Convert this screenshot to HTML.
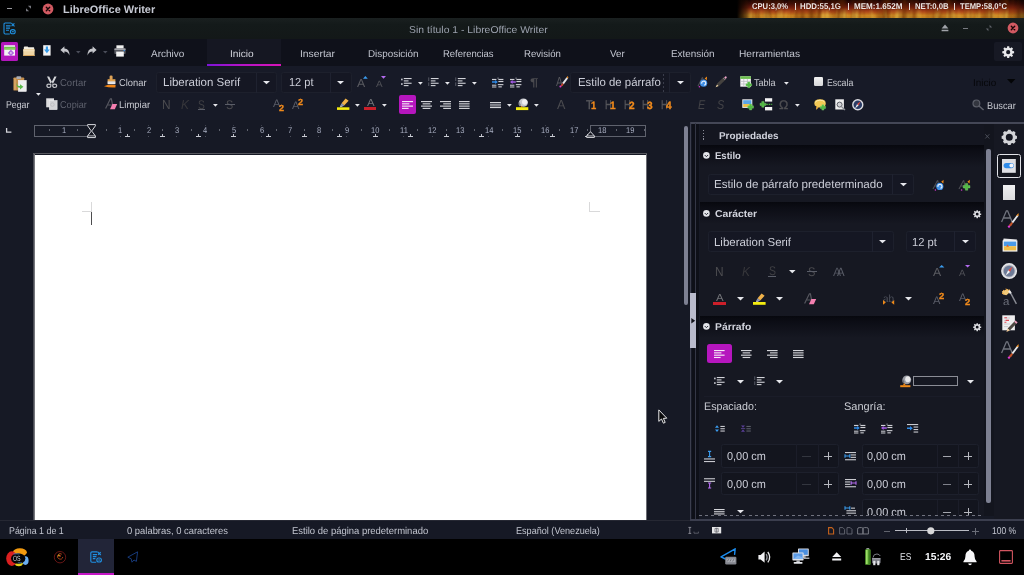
<!DOCTYPE html>
<html>
<head>
<meta charset="utf-8">
<title>Sin título 1 - LibreOffice Writer</title>
<style>
*{box-sizing:border-box;margin:0;padding:0}
html,body{width:1024px;height:575px;overflow:hidden;background:#161925}
body{font-family:"Liberation Sans",sans-serif;font-size:10px;color:#c5c8d2;position:relative}
.abs{position:absolute}
svg{display:block;overflow:visible}
.t{position:absolute;white-space:nowrap;text-rendering:geometricPrecision}
#topbar{left:0;top:0;width:1024px;height:18px;background:#000}
#titlebar{left:0;top:18px;width:1024px;height:21px;background:linear-gradient(#1a2020,#141a1a 30%,#131818)}
#tabrow{left:0;top:39px;width:1024px;height:27px;background:#0f111a}
#toolbar{left:0;top:66px;width:1024px;height:54px;background:#171a27}
#page{left:35px;top:155px;width:611px;height:365px;background:#fff}
#status{left:0;top:521px;width:1024px;height:18px;background:#161925}
#taskbar{left:0;top:539px;width:1024px;height:36px;background:#000}
.combo{position:absolute;background:#151723;border:1px solid #1d202c;border-radius:2.5px}
</style>
</head>
<body>
<!-- p_top -->
<div id="topbar" class="abs"></div>
<div class="abs" style="left:7px;top:8px;width:5px;height:1px;background:#9a9aa0;"></div>
<svg class="abs" style="left:25px;top:5px;" width="7" height="7" viewBox="0 0 7 7"><path d="M1 6.3 V3.2 L4.1 6.3Z M6 0.7 V3.8 L2.9 0.7Z" fill="#77787f"/></svg>
<svg class="abs" style="left:42px;top:3px;" width="12" height="12" viewBox="0 0 12 12"><circle cx="6" cy="6" r="5.4" fill="#d25a62"/><path d="M4.3 4.3 L7.7 7.7 M7.7 4.3 L4.3 7.7" stroke="#1a0506" stroke-width="1.4" stroke-linecap="round"/></svg>
<div class="t" style="left:63.30px;top:4px;font-size:10.8px;line-height:13px;height:13px;color:#c6c9d3;font-weight:bold;transform:scaleX(1.0130);transform-origin:0 0;">LibreOffice Writer</div>
<div id="flame" class="abs" style="left:737px;top:0;width:287px;height:18px;overflow:hidden">
<svg width="287" height="18" viewBox="0 0 287 18" preserveAspectRatio="none" style="position:absolute;left:0;top:0">
<defs>
<linearGradient id="fg" x1="0" y1="0" x2="0" y2="1"><stop offset="0" stop-color="#1a0503"/><stop offset="0.22" stop-color="#3e0c08"/><stop offset="0.45" stop-color="#7c2012"/><stop offset="0.66" stop-color="#b04a1a"/><stop offset="0.85" stop-color="#cc8420"/><stop offset="1" stop-color="#c08222"/></linearGradient>
<linearGradient id="fl" x1="0" y1="0" x2="1" y2="0"><stop offset="0" stop-color="#000"/><stop offset="0.05" stop-color="#000" stop-opacity="0"/><stop offset="0.96" stop-color="#000" stop-opacity="0"/><stop offset="1" stop-color="#000" stop-opacity="0.45"/></linearGradient>
<filter id="noise" x="0" y="0" width="100%" height="100%"><feTurbulence type="fractalNoise" baseFrequency="0.11 0.02" numOctaves="2" seed="7"/><feColorMatrix type="matrix" values="0 0 0 0 0.12  0 0 0 0 0.02  0 0 0 0 0  1.9 0 0 0 -0.7"/></filter>
<filter id="noise2" x="0" y="0" width="100%" height="100%"><feTurbulence type="fractalNoise" baseFrequency="0.16 0.03" numOctaves="2" seed="21"/><feColorMatrix type="matrix" values="0 0 0 0 0.95  0 0 0 0 0.7  0 0 0 0 0.1  0 1.9 0 0 -0.8"/></filter>
<linearGradient id="fm" x1="0" y1="0" x2="0" y2="1"><stop offset="0.4" stop-color="#fff" stop-opacity="0"/><stop offset="0.8" stop-color="#fff"/></linearGradient>
<mask id="mk"><rect width="287" height="18" fill="url(#fm)"/></mask>
</defs>
<rect width="287" height="18" fill="url(#fg)"/>
<rect width="287" height="18" filter="url(#noise)" opacity="0.75"/>
<rect width="287" height="18" filter="url(#noise2)" opacity="0.55" mask="url(#mk)"/>
<rect width="287" height="18" fill="url(#fl)"/>
</svg></div>
<div class="t" style="left:751.70px;top:1px;font-size:8.4px;line-height:10px;height:10px;color:#efe6e2;font-weight:bold;transform:scaleX(0.9123);transform-origin:0 0;text-shadow:0 0 1px rgba(40,10,5,0.8);">CPU:3,0%</div>
<div class="t" style="left:800.30px;top:1px;font-size:8.4px;line-height:10px;height:10px;color:#efe6e2;font-weight:bold;transform:scaleX(0.9344);transform-origin:0 0;text-shadow:0 0 1px rgba(40,10,5,0.8);">HDD:55,1G</div>
<div class="t" style="left:853.70px;top:1px;font-size:8.4px;line-height:10px;height:10px;color:#efe6e2;font-weight:bold;transform:scaleX(0.9640);transform-origin:0 0;text-shadow:0 0 1px rgba(40,10,5,0.8);">MEM:1.652M</div>
<div class="t" style="left:914.50px;top:1px;font-size:8.4px;line-height:10px;height:10px;color:#efe6e2;font-weight:bold;transform:scaleX(0.9283);transform-origin:0 0;text-shadow:0 0 1px rgba(40,10,5,0.8);">NET:0,0B</div>
<div class="t" style="left:960.20px;top:1px;font-size:8.4px;line-height:10px;height:10px;color:#efe6e2;font-weight:bold;transform:scaleX(0.9093);transform-origin:0 0;text-shadow:0 0 1px rgba(40,10,5,0.8);">TEMP:58,0°C</div>
<div class="abs" style="left:794.9px;top:2.6px;width:1.1px;height:7.4px;background:#e6dcd8;"></div>
<div class="abs" style="left:847.9px;top:2.6px;width:1.1px;height:7.4px;background:#e6dcd8;"></div>
<div class="abs" style="left:908.9px;top:2.6px;width:1.1px;height:7.4px;background:#e6dcd8;"></div>
<div class="abs" style="left:954.4px;top:2.6px;width:1.1px;height:7.4px;background:#e6dcd8;"></div>
<div id="titlebar" class="abs"></div>
<svg class="abs" style="left:3px;top:22px;" width="13" height="13" viewBox="0 0 13 13"><g fill="none" stroke="#1f8fe0" stroke-width="1.1"><path d="M8.2 1 H2.2 Q1 1 1 2.2 V10.8 Q1 12 2.2 12 H6.8"/><path d="M3 3.9 H7.6 M3 6.1 H7 M3 8.3 H6"/><path d="M8.4 1.2 L11.5 4.3 M11.4 1.3 L8.6 4.2"/><rect x="7.4" y="7.6" width="4.8" height="4.2" rx="2.1"/><path d="M8.8 9.7 H10.8"/></g></svg>
<div class="t" style="left:409.30px;top:25px;font-size:10px;line-height:12px;height:12px;color:#9ba1ad;transform:scaleX(1.0384);transform-origin:0 0;">Sin título 1 - LibreOffice Writer</div>
<svg class="abs" style="left:941px;top:24px;" width="8" height="8" viewBox="0 0 8 8"><path d="M4 0.6 L7.4 4.4 H0.6Z M0.6 5.8 H7.4 V7.3 H0.6Z" fill="#a0a3a9"/></svg>
<div class="abs" style="left:963px;top:28px;width:5px;height:1px;background:#777a81;"></div>
<svg class="abs" style="left:985px;top:24px;" width="8" height="8" viewBox="0 0 8 8"><path d="M4.6 0.8 V3.4 H7.2Z M3.4 7.2 V4.6 H0.8Z" fill="#60636a"/></svg>
<svg class="abs" style="left:1007px;top:22px;" width="12" height="12" viewBox="0 0 12 12"><circle cx="6" cy="6" r="5.4" fill="#d25a62"/><path d="M4.3 4.3 L7.7 7.7 M7.7 4.3 L4.3 7.7" stroke="#1a0506" stroke-width="1.4" stroke-linecap="round"/></svg>
<div id="tabrow" class="abs"></div>
<div class="abs" style="left:207px;top:39px;width:73.5px;height:27px;background:#151722;"></div>
<div class="abs" style="left:207px;top:64px;width:73.5px;height:2px;background:linear-gradient(90deg,#7d14d8,#b414c8 45%,#d814b8);"></div>
<div class="abs" style="left:994px;top:42px;width:28px;height:19px;background:#171924;border-radius:2px"></div>
<div class="t" style="left:150.80px;top:49px;font-size:10px;line-height:12px;height:12px;color:#c3c6d0;transform:scaleX(0.9986);transform-origin:0 0;">Archivo</div>
<div class="t" style="left:230.30px;top:49px;font-size:10px;line-height:12px;height:12px;color:#d4d6de;transform:scaleX(1.0152);transform-origin:0 0;">Inicio</div>
<div class="t" style="left:300.00px;top:49px;font-size:10px;line-height:12px;height:12px;color:#c3c6d0;transform:scaleX(1.0324);transform-origin:0 0;">Insertar</div>
<div class="t" style="left:367.80px;top:49px;font-size:10px;line-height:12px;height:12px;color:#c3c6d0;transform:scaleX(0.9856);transform-origin:0 0;">Disposición</div>
<div class="t" style="left:442.70px;top:49px;font-size:10px;line-height:12px;height:12px;color:#c3c6d0;transform:scaleX(0.9483);transform-origin:0 0;">Referencias</div>
<div class="t" style="left:524.40px;top:49px;font-size:10px;line-height:12px;height:12px;color:#c3c6d0;transform:scaleX(0.9622);transform-origin:0 0;">Revisión</div>
<div class="t" style="left:610.20px;top:49px;font-size:10px;line-height:12px;height:12px;color:#c3c6d0;transform:scaleX(0.9859);transform-origin:0 0;">Ver</div>
<div class="t" style="left:670.70px;top:49px;font-size:10px;line-height:12px;height:12px;color:#c3c6d0;transform:scaleX(0.9905);transform-origin:0 0;">Extensión</div>
<div class="t" style="left:738.80px;top:49px;font-size:10px;line-height:12px;height:12px;color:#c3c6d0;transform:scaleX(1.0163);transform-origin:0 0;">Herramientas</div>
<div class="abs" style="left:1px;top:42px;width:17px;height:18.5px;background:#b216bc;border-radius:1.5px"></div>
<svg class="abs" style="left:4px;top:45px;" width="12" height="12" viewBox="0 0 12 12"><rect x="0.2" y="0.4" width="10.8" height="10.2" fill="#f4f4f4"/><rect x="0.2" y="0.4" width="10.8" height="1.5" fill="#dcdcde"/><rect x="0.2" y="1.9" width="11.4" height="2.8" fill="#6fc44a"/><path d="M1 3.8 H11" stroke="#a5e07e" stroke-width="0.6"/><circle cx="6.9" cy="7.9" r="2.3" fill="#b06ae0"/><path d="M6.9 4.8 V11 M3.9 7.9 H9.9" stroke="#b06ae0" stroke-width="1.5"/><circle cx="6.9" cy="7.9" r="0.9" fill="#e7d2f6"/></svg>
<svg class="abs" style="left:22.6px;top:45.6px;" width="12" height="10.4" viewBox="0 0 12 10.4"><path d="M0.8 1.4 Q0.8 0.4 1.8 0.4 H4.6 L5.4 1.2 H10.6 Q11.2 1.2 11.2 2 V3.4 H0.8Z" fill="#f3eee2"/><rect x="0.2" y="3" width="11.4" height="7" rx="0.5" fill="#efd6a6"/><rect x="0.2" y="4.4" width="11.4" height="0.8" fill="#f7e7c8"/><rect x="0.2" y="9" width="11.4" height="1" fill="#d9a860"/></svg>
<svg class="abs" style="left:43.4px;top:45.4px;" width="8" height="11" viewBox="0 0 8 11"><rect x="0.2" y="0.2" width="7.4" height="10.4" fill="#f3f3f4"/><path d="M2.8 1.6 H5 V4.6 H6.8 L3.9 8.2 L1 4.6 H2.8Z" fill="#379be8"/></svg>
<svg class="abs" style="left:60px;top:46px;" width="10" height="10" viewBox="0 0 10 10"><path d="M0.4 3.9 L4.4 0.3 V2.5 Q9.6 2.6 9.4 9.6 Q8.2 5.6 4.4 5.6 V7.6Z" fill="#c4c5ca"/></svg>
<svg class="abs" style="left:76.2px;top:50.8px;" width="4.6" height="2.9" viewBox="0 0 4.6 2.9"><path d="M0 0 H4.6 L2.3 2.4Z" fill="#4a4d59"/></svg>
<svg class="abs" style="left:86.5px;top:46px;" width="10" height="10" viewBox="0 0 10 10"><path d="M9.6 3.9 L5.6 0.3 V2.5 Q0.4 2.6 0.6 9.6 Q1.8 5.6 5.6 5.6 V7.6Z" fill="#c4c5ca"/></svg>
<svg class="abs" style="left:103.2px;top:50.8px;" width="4.6" height="2.9" viewBox="0 0 4.6 2.9"><path d="M0 0 H4.6 L2.3 2.4Z" fill="#4a4d59"/></svg>
<svg class="abs" style="left:114px;top:45px;" width="12" height="12" viewBox="0 0 12 12"><rect x="2.4" y="0.3" width="7.2" height="3.4" fill="#f0f0f0"/><rect x="0.3" y="3.4" width="11.4" height="5.6" rx="0.9" fill="#565860"/><rect x="0.3" y="3.4" width="11.4" height="1.3" rx="0.6" fill="#b9bac0"/><rect x="2.2" y="6.6" width="7.6" height="5" fill="#f4f4f4"/><rect x="9.6" y="5" width="1.3" height="1.1" fill="#3a8fe0"/></svg>
<svg class="abs" style="left:1002px;top:45.5px;" width="12.4" height="12.4" viewBox="-6.2 -6.2 12.4 12.4"><path fill-rule="evenodd" fill="#e9e9ec" d="M5.91,-1.03 L5.91,1.03 L4.34,1.19 L3.91,2.23 L4.91,3.45 L3.45,4.91 L2.23,3.91 L1.19,4.34 L1.03,5.91 L-1.03,5.91 L-1.19,4.34 L-2.23,3.91 L-3.45,4.91 L-4.91,3.45 L-3.91,2.23 L-4.34,1.19 L-5.91,1.03 L-5.91,-1.03 L-4.34,-1.19 L-3.91,-2.23 L-4.91,-3.45 L-3.45,-4.91 L-2.23,-3.91 L-1.19,-4.34 L-1.03,-5.91 L1.03,-5.91 L1.19,-4.34 L2.23,-3.91 L3.45,-4.91 L4.91,-3.45 L3.91,-2.23 L4.34,-1.19Z M2.1 0 A2.1 2.1 0 1 0 -2.1 0 A2.1 2.1 0 1 0 2.1 0Z"/></svg>
<!-- p_toolbar -->
<div id="toolbar" class="abs"></div>
<svg class="abs" style="left:12.5px;top:75.5px;" width="14" height="16" viewBox="0 0 14 16"><rect x="0.4" y="1.4" width="10.8" height="13.2" rx="0.9" fill="#c48e4c"/><rect x="1.2" y="2.4" width="1.6" height="11.4" fill="#d9a866"/><rect x="3.4" y="0.2" width="4.8" height="2.8" rx="0.8" fill="#a9abb2"/><rect x="5.3" y="4.3" width="8" height="11.2" fill="#ededee"/><rect x="5.3" y="4.3" width="8" height="11.2" fill="none" stroke="#fafafa" stroke-width="0.5"/><path d="M3.6 6.4 Q4 10 7 10 V8.2 L10.4 10.8 L7 13.4 V11.8 Q3 11.6 3.6 6.4Z" fill="#58b848"/></svg>
<svg class="abs" style="left:36.4px;top:93px;" width="4.8" height="3.3" viewBox="0 0 4.8 3.3"><path d="M0 0 H4.8 L2.4 2.8Z" fill="#e8e9ee"/></svg>
<div class="t" style="left:6.30px;top:100px;font-size:10px;line-height:12px;height:12px;color:#c9cbd2;transform:scaleX(0.8769);transform-origin:0 0;">Pegar</div>
<svg class="abs" style="left:46px;top:75.5px;" width="12" height="13" viewBox="0 0 12 13"><path d="M1 0.5 L3.2 0.5 L6.9 7.9 L5.1 8.7Z M10.6 0.5 L8.4 0.5 L4.7 7.9 L6.5 8.7Z" fill="#d4d5d9"/><ellipse cx="2.9" cy="9.8" rx="2" ry="1.7" fill="none" stroke="#c2c3c8" stroke-width="1.2"/><ellipse cx="8.7" cy="9.8" rx="2" ry="1.7" fill="none" stroke="#c2c3c8" stroke-width="1.2"/></svg>
<div class="t" style="left:60.20px;top:78px;font-size:10px;line-height:12px;height:12px;color:#5e616d;transform:scaleX(0.9502);transform-origin:0 0;">Cortar</div>
<svg class="abs" style="left:46px;top:97.5px;" width="12" height="13" viewBox="0 0 12 13"><rect x="0.2" y="0.3" width="7.8" height="9" fill="#dcdcde"/><rect x="3.3" y="2.6" width="7.8" height="9" fill="#d2d2d5"/><rect x="3.3" y="2.6" width="7.8" height="9" fill="none" stroke="#ececee" stroke-width="0.6"/><circle cx="6.4" cy="6.6" r="1.8" fill="none" stroke="#bcbcc0" stroke-width="0.9"/></svg>
<div class="t" style="left:60.20px;top:100px;font-size:10px;line-height:12px;height:12px;color:#5e616d;transform:scaleX(0.9097);transform-origin:0 0;">Copiar</div>
<svg class="abs" style="left:104px;top:75px;" width="13" height="14" viewBox="0 0 13 14"><rect x="5.6" y="0.4" width="3" height="4.6" rx="1.3" fill="#e0a458"/><rect x="3.6" y="4.2" width="7.8" height="2.6" fill="#e2a450"/><rect x="3.6" y="6.4" width="7.8" height="2.8" fill="#f2f2f3"/><path d="M3.6 7.8 H11.4" stroke="#c9cace" stroke-width="0.6"/><path d="M0 11.2 Q4 9.4 11.6 10 L11.4 12.4 Q5 12.8 0 11.2Z" fill="#f08414"/></svg>
<div class="t" style="left:118.50px;top:78px;font-size:10px;line-height:12px;height:12px;color:#c9cbd2;transform:scaleX(0.9335);transform-origin:0 0;">Clonar</div>
<svg class="abs" style="left:105px;top:97.5px;" width="13" height="13" viewBox="0 0 13 13"><path d="M0.6 10.6 L5.4 0.8 H6.4 L7.6 7" stroke="#56575f" stroke-width="1.2" fill="none"/><path d="M2.8 7 H7" stroke="#56575f" stroke-width="1"/><path d="M7.4 6 L12.2 6 L9.8 11.2 L5 11.2Z" fill="#f47fb0"/></svg>
<div class="t" style="left:118.50px;top:100px;font-size:10px;line-height:12px;height:12px;color:#c9cbd2;transform:scaleX(0.9485);transform-origin:0 0;">Limpiar</div>
<div class="combo" style="left:156px;top:71.5px;width:120.6px;height:21.8px"></div>
<div class="abs" style="left:255.5px;top:72.5px;width:1px;height:20px;background:#1f2230;"></div>
<div class="t" style="left:162.80px;top:76px;font-size:11.6px;line-height:14px;height:14px;color:#ccced8;transform:scaleX(0.9894);transform-origin:0 0;">Liberation Serif</div>
<svg class="abs" style="left:262.8px;top:81.4px;" width="7" height="3.7" viewBox="0 0 7 3.7"><path d="M0 0 H7 L3.5 3.2Z" fill="#e6e7ec"/></svg>
<div class="combo" style="left:281.4px;top:71.5px;width:70.2px;height:21.8px"></div>
<div class="abs" style="left:330px;top:72.5px;width:1px;height:20px;background:#1f2230;"></div>
<div class="t" style="left:288.50px;top:76px;font-size:11.6px;line-height:14px;height:14px;color:#ccced8;transform:scaleX(0.9496);transform-origin:0 0;">12 pt</div>
<svg class="abs" style="left:337.4px;top:81.4px;" width="7" height="3.7" viewBox="0 0 7 3.7"><path d="M0 0 H7 L3.5 3.2Z" fill="#e6e7ec"/></svg>
<div class="t" style="left:357.20px;top:77px;font-size:11.6px;line-height:14px;height:14px;color:#5a5b61;transform:scaleX(1.0598);transform-origin:0 0;">A</div>
<svg class="abs" style="left:363.2px;top:75.8px;" width="5" height="3" viewBox="0 0 5 3"><path d="M0 2.8 L2.4 0 L4.8 2.8Z" fill="#3b9df0"/></svg>
<div class="t" style="left:375.60px;top:79px;font-size:9px;line-height:11px;height:11px;color:#505157;transform:scaleX(1.0994);transform-origin:0 0;">A</div>
<svg class="abs" style="left:381.4px;top:75.8px;" width="5.2" height="3" viewBox="0 0 5.2 3"><path d="M0 0 H5 L2.5 2.8Z" fill="#b56cf0"/></svg>
<svg class="abs" style="left:401px;top:78.1px;" width="11.5" height="9" viewBox="0 0 11.5 9"><rect x="2.8" y="0.0" width="7.8" height="1.1" fill="#d2d3d9"/><rect x="2.8" y="2.35" width="4.7" height="1.1" fill="#d2d3d9"/><rect x="2.8" y="4.7" width="7.8" height="1.1" fill="#d2d3d9"/><rect x="2.8" y="7.050000000000001" width="4.7" height="1.1" fill="#d2d3d9"/><rect x="0" y="0.6" width="1.7" height="1.7" fill="#b9bbc3"/><rect x="0" y="5.2" width="1.7" height="1.7" fill="#b9bbc3"/></svg>
<svg class="abs" style="left:418px;top:81.6px;" width="4.8" height="3.3" viewBox="0 0 4.8 3.3"><path d="M0 0 H4.8 L2.4 2.8Z" fill="#e6e7ec"/></svg>
<svg class="abs" style="left:427.6px;top:78.1px;" width="11.5" height="9" viewBox="0 0 11.5 9"><rect x="2.8" y="0.0" width="7.8" height="1.1" fill="#d2d3d9"/><rect x="2.8" y="2.35" width="4.7" height="1.1" fill="#d2d3d9"/><rect x="2.8" y="4.7" width="7.8" height="1.1" fill="#d2d3d9"/><rect x="2.8" y="7.050000000000001" width="4.7" height="1.1" fill="#d2d3d9"/><rect x="0.4" y="-0.6" width="0.8" height="3.6" fill="#666975"/><rect x="0.4" y="4.4" width="0.8" height="3.6" fill="#666975"/></svg>
<svg class="abs" style="left:444.6px;top:81.6px;" width="4.8" height="3.3" viewBox="0 0 4.8 3.3"><path d="M0 0 H4.8 L2.4 2.8Z" fill="#e6e7ec"/></svg>
<svg class="abs" style="left:455px;top:78.1px;" width="11.5" height="9" viewBox="0 0 11.5 9"><rect x="2.8" y="0.0" width="7.8" height="1.1" fill="#d2d3d9"/><rect x="2.8" y="2.35" width="4.7" height="1.1" fill="#d2d3d9"/><rect x="2.8" y="4.7" width="7.8" height="1.1" fill="#d2d3d9"/><rect x="2.8" y="7.050000000000001" width="4.7" height="1.1" fill="#d2d3d9"/><rect x="0.4" y="-0.6" width="0.8" height="3.6" fill="#666975"/><rect x="0.4" y="4.4" width="0.8" height="3.6" fill="#666975"/></svg>
<svg class="abs" style="left:472px;top:81.6px;" width="4.8" height="3.3" viewBox="0 0 4.8 3.3"><path d="M0 0 H4.8 L2.4 2.8Z" fill="#e6e7ec"/></svg>
<svg class="abs" style="left:491.6px;top:77.6px;" width="11.6" height="9.4" viewBox="0 0 11.6 9.4"><rect x="0" y="0.9" width="4.4" height="1.2" fill="#cfd0d6"/><rect x="0" y="6.7" width="4.4" height="1" fill="#cfd0d6"/><rect x="0" y="8.5" width="4.4" height="1" fill="#cfd0d6"/><rect x="6.4" y="0.9" width="5" height="1.2" fill="#cfd0d6"/><rect x="6.4" y="3" width="5" height="1.1" fill="#cfd0d6"/><rect x="5.8" y="6.1" width="5.6" height="1.1" fill="#cfd0d6"/><rect x="6.4" y="8.3" width="3.4" height="1.1" fill="#cfd0d6"/><rect x="5.6" y="-0.4" width="0.9" height="1.1" fill="#c9cad0"/><path d="M0 3.2 H3.2 V2 L5.8 4 L3.2 6 V4.8 H0Z" fill="#2f8be8"/></svg>
<svg class="abs" style="left:510.2px;top:77.6px;" width="11.6" height="9.4" viewBox="0 0 11.6 9.4"><rect x="0" y="0.9" width="4.4" height="1.2" fill="#cfd0d6"/><rect x="0" y="6.7" width="4.4" height="1" fill="#cfd0d6"/><rect x="0" y="8.5" width="4.4" height="1" fill="#cfd0d6"/><rect x="6.4" y="0.9" width="5" height="1.2" fill="#cfd0d6"/><rect x="6.4" y="3" width="5" height="1.1" fill="#cfd0d6"/><rect x="5.8" y="6.1" width="5.6" height="1.1" fill="#cfd0d6"/><rect x="6.4" y="8.3" width="3.4" height="1.1" fill="#cfd0d6"/><rect x="5.6" y="-0.4" width="0.9" height="1.1" fill="#c9cad0"/><path d="M5.8 3.2 H2.6 V2 L0 4 L2.6 6 V4.8 H5.8Z" fill="#a45be6"/></svg>
<div class="t" style="left:530.40px;top:76px;font-size:11.4px;line-height:14px;height:14px;color:#4b4b4f;font-weight:bold;transform:scaleX(1.3250);transform-origin:0 0;">¶</div>
<div class="t" style="left:556.40px;top:74px;font-size:13px;line-height:16px;height:16px;color:#56575d;transform:scaleX(0.7842);transform-origin:0 0;">A</div>
<svg class="abs" style="left:559px;top:76.4px;" width="10" height="11.5" viewBox="0 0 10 11.5"><path d="M7.6 1.2 L9 2.4 L4.8 8.2 L3.2 7Z" fill="#e4e4e7"/><path d="M7.6 1.2 L8.8 0 L9.4 1.8 L9 2.4Z" fill="#f08a18"/><path d="M3.2 7 L4.8 8.2 L3.4 10 L1.6 10.8 L2 9Z" fill="#c2442a"/><circle cx="1.4" cy="10.6" r="1" fill="#d63ad0"/></svg>
<div class="combo" style="left:570.4px;top:71.5px;width:120.8px;height:21.8px"></div>
<div class="abs" style="left:669px;top:72.5px;width:1px;height:20px;background:#1f2230;"></div>
<div class="abs" style="left:662.6px;top:74px;width:1px;height:18px;background:repeating-linear-gradient(#3a3d4b 0 2px,transparent 2px 4px);"></div>
<div class="t" style="left:577.60px;top:76px;font-size:11.6px;line-height:14px;height:14px;color:#ccced8;transform:scaleX(0.9814);transform-origin:0 0;">Estilo de párrafo</div>
<svg class="abs" style="left:677px;top:81.4px;" width="7" height="3.7" viewBox="0 0 7 3.7"><path d="M0 0 H7 L3.5 3.2Z" fill="#e6e7ec"/></svg>
<div class="t" style="left:697.60px;top:75px;font-size:12.6px;line-height:15px;height:15px;color:#505157;font-style:italic;transform:scaleX(0.8567);transform-origin:0 0;">A</div>
<svg class="abs" style="left:699.4px;top:76px;" width="10" height="12" viewBox="0 0 10 12"><circle cx="4.6" cy="7.2" r="3.6" fill="#3f8fe6"/><path d="M2.8 7.6 A2 2 0 1 1 5.2 9.1" stroke="#eaf2fc" stroke-width="1.1" fill="none"/><path d="M5.6 2.6 L8 0.6 L7.8 4.2Z" fill="#f08a18"/><circle cx="0.4" cy="10.8" r="0.8" fill="#d63ad0"/></svg>
<svg class="abs" style="left:714.5px;top:76px;" width="12" height="12" viewBox="0 0 12 12"><path d="M8.8 1 L11 3.2 L3.8 10.2 L1.6 8Z" fill="#45423f"/><path d="M9.2 1.4 L10.2 0.4 Q11.4 0.2 11.8 1.4 L10.8 3Z" fill="#f2a6cc"/><path d="M2 8.4 L3.6 10 L0.6 11.2Z" fill="#f3d9a8"/><path d="M8.4 2.2 L10 3.8" stroke="#b8b8bc" stroke-width="0.7"/></svg>
<svg class="abs" style="left:740.3px;top:75.8px;" width="12" height="12" viewBox="0 0 12 12"><rect x="0.3" y="0.3" width="10.6" height="10.4" fill="#f6f6f6"/><rect x="0.3" y="0.3" width="10.6" height="2.6" fill="#6cbf4e"/><path d="M0.3 5.4 H10.9 M0.3 8 H10.9 M3.8 2.9 V10.7 M7.4 2.9 V10.7" stroke="#b8b9be" stroke-width="0.7"/><path d="M7.65 5.9 h2.3 v1.75 h1.75 v2.3 h-1.75 v1.75 h-2.3 v-1.75 h-1.75 v-2.3 h1.75Z" fill="#52b944" stroke="#8fdc80" stroke-width="0.35"/></svg>
<div class="t" style="left:754.40px;top:78px;font-size:10px;line-height:12px;height:12px;color:#c9cbd2;transform:scaleX(0.9035);transform-origin:0 0;">Tabla</div>
<svg class="abs" style="left:783.5px;top:81.6px;" width="4.8" height="3.3" viewBox="0 0 4.8 3.3"><path d="M0 0 H4.8 L2.4 2.8Z" fill="#e6e7ec"/></svg>
<div class="abs" style="left:813.8px;top:77px;width:9.4px;height:9.4px;background:linear-gradient(#f2f2f2,#d6d6d8);border-radius:1.2px"></div>
<div class="t" style="left:827.00px;top:78px;font-size:10px;line-height:12px;height:12px;color:#c9cbd2;transform:scaleX(0.8762);transform-origin:0 0;">Escala</div>
<div class="t" style="left:973.00px;top:78px;font-size:10px;line-height:12px;height:12px;color:#06070a;transform:scaleX(0.9938);transform-origin:0 0;">Inicio</div>
<svg class="abs" style="left:1006.6px;top:79px;" width="8.6" height="5" viewBox="0 0 8.6 5"><path d="M0 0 H8.4 L4.2 4.6Z" fill="#030406"/></svg>
<div class="t" style="left:161.60px;top:97px;font-size:13px;line-height:16px;height:16px;color:#4b4b4f;transform:scaleX(0.9160);transform-origin:0 0;">N</div>
<div class="t" style="left:180.60px;top:97px;font-size:13px;line-height:16px;height:16px;color:#37373b;font-style:italic;transform:scaleX(0.9226);transform-origin:0 0;">K</div>
<div class="t" style="left:198.40px;top:98px;font-size:12.6px;line-height:15px;height:15px;color:#3f3f43;transform:scaleX(0.8091);transform-origin:0 0;">S</div>
<div class="abs" style="left:198.2px;top:109.4px;width:7.2px;height:1px;background:#5a5d68;"></div>
<svg class="abs" style="left:213px;top:103.8px;" width="4.8" height="3.3" viewBox="0 0 4.8 3.3"><path d="M0 0 H4.8 L2.4 2.8Z" fill="#e6e7ec"/></svg>
<div class="t" style="left:226.40px;top:98px;font-size:12.6px;line-height:15px;height:15px;color:#4b4b4f;transform:scaleX(0.8567);transform-origin:0 0;">S</div>
<div class="abs" style="left:225px;top:104.2px;width:10.4px;height:1px;background:#5a5d68;"></div>
<div class="t" style="left:272.80px;top:98px;font-size:11px;line-height:13px;height:13px;color:#5b5e69;transform:scaleX(1.0086);transform-origin:0 0;">A</div>
<div class="t" style="left:278.80px;top:103px;font-size:8.8px;line-height:11px;height:11px;color:#f08a1c;font-weight:bold;transform:scaleX(1.0215);transform-origin:0 0;-webkit-text-stroke:0.3px #f08a1c;">2</div>
<div class="t" style="left:291.60px;top:100px;font-size:11px;line-height:13px;height:13px;color:#5b5e69;transform:scaleX(1.0086);transform-origin:0 0;">A</div>
<div class="t" style="left:297.80px;top:97px;font-size:8.8px;line-height:11px;height:11px;color:#f08a1c;font-weight:bold;transform:scaleX(1.0215);transform-origin:0 0;-webkit-text-stroke:0.3px #f08a1c;">2</div>
<svg class="abs" style="left:337px;top:98px;" width="13" height="12" viewBox="0 0 13 12"><path d="M8.6 0.4 L11.6 2.8 L7.2 7.4 L4.6 5.2Z" fill="#f0b24a"/><path d="M4.6 5.2 L7.2 7.4 L5.6 8.6 L3.6 7Z" fill="#8f98b4"/><path d="M3.6 7 L5.6 8.6 L3 9.2Z" fill="#c9cbd2"/><rect x="0" y="9.3" width="12.4" height="2.6" fill="#f4ec10"/></svg>
<svg class="abs" style="left:354.6px;top:103.8px;" width="4.8" height="3.3" viewBox="0 0 4.8 3.3"><path d="M0 0 H4.8 L2.4 2.8Z" fill="#e6e7ec"/></svg>
<div class="t" style="left:366.60px;top:98px;font-size:10.2px;line-height:12px;height:12px;color:#727378;transform:scaleX(1.1171);transform-origin:0 0;">A</div>
<div class="abs" style="left:363.9px;top:107.3px;width:12.4px;height:2.6px;background:#cc1f2a;"></div>
<svg class="abs" style="left:381.6px;top:103.8px;" width="4.8" height="3.3" viewBox="0 0 4.8 3.3"><path d="M0 0 H4.8 L2.4 2.8Z" fill="#e6e7ec"/></svg>
<div class="abs" style="left:398.6px;top:95.2px;width:17.6px;height:18.6px;background:#b616be;border-radius:2px"></div>
<svg class="abs" style="left:402px;top:100.8px;" width="11" height="9" viewBox="0 0 11 9"><rect x="0" y="0.0" width="11" height="1.15" fill="#f6e9f7"/><rect x="0" y="2.27" width="7.4" height="1.15" fill="#f6e9f7"/><rect x="0" y="4.54" width="11" height="1.15" fill="#f6e9f7"/><rect x="0" y="6.8100000000000005" width="6.6" height="1.15" fill="#f6e9f7"/></svg>
<svg class="abs" style="left:421px;top:100.8px;" width="11" height="9" viewBox="0 0 11 9"><rect x="0" y="0.0" width="11" height="1.15" fill="#d4d5da"/><rect x="1.6" y="2.27" width="7.8" height="1.15" fill="#d4d5da"/><rect x="0" y="4.54" width="11" height="1.15" fill="#d4d5da"/><rect x="1.6" y="6.8100000000000005" width="7.8" height="1.15" fill="#d4d5da"/></svg>
<svg class="abs" style="left:439.8px;top:100.8px;" width="11" height="9" viewBox="0 0 11 9"><rect x="0" y="0.0" width="11" height="1.15" fill="#d4d5da"/><rect x="3.2" y="2.27" width="7.8" height="1.15" fill="#d4d5da"/><rect x="0" y="4.54" width="11" height="1.15" fill="#d4d5da"/><rect x="3.2" y="6.8100000000000005" width="7.8" height="1.15" fill="#d4d5da"/></svg>
<svg class="abs" style="left:458.6px;top:100.8px;" width="11" height="9" viewBox="0 0 11 9"><rect x="0" y="0.0" width="10.6" height="1.15" fill="#d4d5da"/><rect x="0" y="2.27" width="10.6" height="1.15" fill="#d4d5da"/><rect x="0" y="4.54" width="10.6" height="1.15" fill="#d4d5da"/><rect x="0" y="6.8100000000000005" width="10.6" height="1.15" fill="#d4d5da"/></svg>
<svg class="abs" style="left:490.2px;top:101.9px;" width="11" height="6.4" viewBox="0 0 11 6.4"><rect x="0" y="0" width="11" height="1.1" fill="#d4d5da"/><rect x="0" y="1.6" width="11" height="3" fill="#6c6e78"/><rect x="0" y="2.2" width="11" height="0.7" fill="#8e9099"/><rect x="0" y="3.6" width="11" height="0.7" fill="#8e9099"/><rect x="0" y="5" width="11" height="1.1" fill="#d4d5da"/></svg>
<svg class="abs" style="left:507.2px;top:103.8px;" width="4.8" height="3.3" viewBox="0 0 4.8 3.3"><path d="M0 0 H4.8 L2.4 2.8Z" fill="#e6e7ec"/></svg>
<svg class="abs" style="left:516.4px;top:97.6px;" width="13" height="12.4" viewBox="0 0 13 12.4"><ellipse cx="7.4" cy="4.6" rx="4.6" ry="4.2" fill="#c4c6cc"/><ellipse cx="8.6" cy="4" rx="2.6" ry="2.8" fill="#eeeeF0"/><path d="M3 3.4 Q1.6 6 3.4 8.4 L5 7Z" fill="#8a8c94"/><path d="M4.4 7.4 L6.6 8.8 L5.4 9.6Z" fill="#f08a18"/><rect x="0" y="9.2" width="12.3" height="2.9" fill="#f4ec10"/></svg>
<svg class="abs" style="left:534.2px;top:103.8px;" width="4.8" height="3.3" viewBox="0 0 4.8 3.3"><path d="M0 0 H4.8 L2.4 2.8Z" fill="#e6e7ec"/></svg>
<div class="t" style="left:557.20px;top:97px;font-size:13.2px;line-height:16px;height:16px;color:#4c4c50;transform:scaleX(0.9540);transform-origin:0 0;">A</div>
<div class="t" style="left:586.20px;top:98px;font-size:12.6px;line-height:15px;height:15px;color:#5c5c60;transform:scaleX(0.8575);transform-origin:0 0;-webkit-text-stroke:0.3px #5c5c60;">T</div>
<div class="t" style="left:591.40px;top:100px;font-size:10.6px;line-height:13px;height:13px;color:#f08a1c;font-weight:bold;transform:scaleX(0.8821);transform-origin:0 0;-webkit-text-stroke:0.35px #f08a1c;">1</div>
<div class="t" style="left:605.00px;top:98px;font-size:12.6px;line-height:15px;height:15px;color:#56565a;transform:scaleX(0.7473);transform-origin:0 0;-webkit-text-stroke:0.3px #56565a;">H</div>
<div class="t" style="left:610.00px;top:100px;font-size:10.6px;line-height:13px;height:13px;color:#f08a1c;font-weight:bold;transform:scaleX(0.9499);transform-origin:0 0;-webkit-text-stroke:0.35px #f08a1c;">1</div>
<div class="t" style="left:623.80px;top:98px;font-size:12.6px;line-height:15px;height:15px;color:#56565a;transform:scaleX(0.7473);transform-origin:0 0;-webkit-text-stroke:0.3px #56565a;">H</div>
<div class="t" style="left:628.80px;top:100px;font-size:10.6px;line-height:13px;height:13px;color:#f08a1c;font-weight:bold;transform:scaleX(0.9499);transform-origin:0 0;-webkit-text-stroke:0.35px #f08a1c;">2</div>
<div class="t" style="left:642.20px;top:98px;font-size:12.6px;line-height:15px;height:15px;color:#56565a;transform:scaleX(0.7473);transform-origin:0 0;-webkit-text-stroke:0.3px #56565a;">H</div>
<div class="t" style="left:647.20px;top:100px;font-size:10.6px;line-height:13px;height:13px;color:#f08a1c;font-weight:bold;transform:scaleX(0.9499);transform-origin:0 0;-webkit-text-stroke:0.35px #f08a1c;">3</div>
<div class="t" style="left:660.50px;top:98px;font-size:12.6px;line-height:15px;height:15px;color:#56565a;transform:scaleX(0.7473);transform-origin:0 0;-webkit-text-stroke:0.3px #56565a;">H</div>
<div class="t" style="left:665.50px;top:100px;font-size:10.6px;line-height:13px;height:13px;color:#f08a1c;font-weight:bold;transform:scaleX(0.9499);transform-origin:0 0;-webkit-text-stroke:0.35px #f08a1c;">4</div>
<div class="t" style="left:697.60px;top:97px;font-size:12.8px;line-height:15px;height:15px;color:#424246;font-style:italic;transform:scaleX(0.8433);transform-origin:0 0;">E</div>
<div class="t" style="left:716.80px;top:97px;font-size:12.8px;line-height:15px;height:15px;color:#424246;font-style:italic;transform:scaleX(0.8433);transform-origin:0 0;">S</div>
<svg class="abs" style="left:741.9px;top:99px;" width="11.4" height="10.8" viewBox="0 0 11.4 10.8"><rect x="0.3" y="0.3" width="10" height="8.6" fill="#f2f2f2"/><rect x="1.2" y="1.2" width="8.2" height="3.8" fill="#5aa4e6"/><rect x="1.2" y="5" width="8.2" height="3" fill="#f0c24a"/><path d="M7.449999999999999 5.1 h2.3 v1.75 h1.75 v2.3 h-1.75 v1.75 h-2.3 v-1.75 h-1.75 v-2.3 h1.75Z" fill="#52b944" stroke="#8fdc80" stroke-width="0.35"/></svg>
<svg class="abs" style="left:760.2px;top:97.8px;" width="12.4" height="12.6" viewBox="0 0 12.4 12.6"><rect x="5" y="0.2" width="7.2" height="3.4" fill="#f4f4f5"/><rect x="5" y="9" width="7.2" height="3.4" fill="#f4f4f5"/><path d="M6.2 6.3 H12.2" stroke="#4db53f" stroke-width="1.3" stroke-dasharray="1.6 0.9"/><path d="M1.75 3.4 h2.3 v1.75 h1.75 v2.3 h-1.75 v1.75 h-2.3 v-1.75 h-1.75 v-2.3 h1.75Z" fill="#52b944" stroke="#8fdc80" stroke-width="0.35"/></svg>
<div class="t" style="left:778.70px;top:98px;font-size:12.4px;line-height:15px;height:15px;color:#4e4e52;transform:scaleX(1.0033);transform-origin:0 0;-webkit-text-stroke:0.3px #4e4e52;">Ω</div>
<svg class="abs" style="left:794.6px;top:103.8px;" width="4.8" height="3.3" viewBox="0 0 4.8 3.3"><path d="M0 0 H4.8 L2.4 2.8Z" fill="#e6e7ec"/></svg>
<svg class="abs" style="left:814.2px;top:98.6px;" width="12.4" height="11.6" viewBox="0 0 12.4 11.6"><path d="M0.3 4.4 Q0.3 0.3 6 0.3 Q11.8 0.3 11.8 4.4 Q11.8 8.4 6 8.4 Q5.2 8.4 4.6 8.3 L2.2 10.8 L2.6 7.6 Q0.3 6.6 0.3 4.4Z" fill="#f3c955"/><path d="M1.4 3.6 Q2 1.2 6 1.2 Q9.6 1.2 10.6 3.2" stroke="#fbe9ae" stroke-width="0.9" fill="none"/><path d="M2.2 10.8 L2.6 7.6 L4.6 8.3Z" fill="#e9a53a"/><path d="M7.8500000000000005 5.7 h2.1 v1.6500000000000001 h1.6500000000000001 v2.1 h-1.6500000000000001 v1.6500000000000001 h-2.1 v-1.6500000000000001 h-1.6500000000000001 v-2.1 h1.6500000000000001Z" fill="#52b944" stroke="#8fdc80" stroke-width="0.35"/></svg>
<svg class="abs" style="left:834.5px;top:98.8px;" width="10.6" height="11.4" viewBox="0 0 10.6 11.4"><rect x="0.3" y="0.3" width="8.6" height="10.2" fill="#eeeeef"/><circle cx="4.6" cy="5.6" r="2.5" fill="#d2d3d7" stroke="#5a5c64" stroke-width="1"/><path d="M6.4 7.6 L10 11" stroke="#8c8e96" stroke-width="1.3"/></svg>
<svg class="abs" style="left:851.6px;top:98.6px;" width="11.6" height="11.6" viewBox="0 0 11.6 11.6"><circle cx="5.8" cy="5.8" r="5" fill="#2a3c66" stroke="#dcdde2" stroke-width="1.4"/><path d="M8.6 2.2 L6.6 6.4 L5.2 5Z" fill="#e8483a"/><path d="M3 9.4 L5 5.2 L6.6 6.6Z" fill="#eef0f4"/></svg>
<svg class="abs" style="left:972px;top:99px;" width="12.6" height="11.6" viewBox="0 0 12.6 11.6"><circle cx="4.4" cy="4.4" r="3.4" fill="#33363f" stroke="#5c5f69" stroke-width="1.2"/><path d="M7 7 L11.6 11" stroke="#5c5f69" stroke-width="1.6"/></svg>
<div class="t" style="left:986.80px;top:101px;font-size:10px;line-height:12px;height:12px;color:#c9cbd2;transform:scaleX(0.9221);transform-origin:0 0;">Buscar</div>
<!-- p_doc -->
<svg class="abs" style="left:6px;top:128.4px;" width="6" height="5" viewBox="0 0 6 5"><path d="M0.6 0 V4.2 H5.4" stroke="#d3d4da" stroke-width="1.3" fill="none"/></svg>
<div class="abs" style="left:34px;top:125.3px;width:58px;height:11.6px;background:transparent;border:1px solid #5f626d"></div>
<div class="abs" style="left:590px;top:125.3px;width:56px;height:11.6px;background:transparent;border:1px solid #5f626d"></div>
<div class="t" style="left:61.55px;top:125px;font-size:8.4px;line-height:10px;height:10px;color:#a9afc2;transform:scaleX(0.9000);transform-origin:0 0;">1</div>
<div class="t" style="left:118.25px;top:125px;font-size:8.4px;line-height:10px;height:10px;color:#a9afc2;transform:scaleX(0.9000);transform-origin:0 0;">1</div>
<div class="t" style="left:146.60px;top:125px;font-size:8.4px;line-height:10px;height:10px;color:#a9afc2;transform:scaleX(0.9000);transform-origin:0 0;">2</div>
<div class="t" style="left:174.95px;top:125px;font-size:8.4px;line-height:10px;height:10px;color:#a9afc2;transform:scaleX(0.9000);transform-origin:0 0;">3</div>
<div class="t" style="left:203.30px;top:125px;font-size:8.4px;line-height:10px;height:10px;color:#a9afc2;transform:scaleX(0.9000);transform-origin:0 0;">4</div>
<div class="t" style="left:231.65px;top:125px;font-size:8.4px;line-height:10px;height:10px;color:#a9afc2;transform:scaleX(0.9000);transform-origin:0 0;">5</div>
<div class="t" style="left:260.00px;top:125px;font-size:8.4px;line-height:10px;height:10px;color:#a9afc2;transform:scaleX(0.9000);transform-origin:0 0;">6</div>
<div class="t" style="left:288.35px;top:125px;font-size:8.4px;line-height:10px;height:10px;color:#a9afc2;transform:scaleX(0.9000);transform-origin:0 0;">7</div>
<div class="t" style="left:316.70px;top:125px;font-size:8.4px;line-height:10px;height:10px;color:#a9afc2;transform:scaleX(0.9000);transform-origin:0 0;">8</div>
<div class="t" style="left:345.05px;top:125px;font-size:8.4px;line-height:10px;height:10px;color:#a9afc2;transform:scaleX(0.9000);transform-origin:0 0;">9</div>
<div class="t" style="left:371.30px;top:125px;font-size:8.4px;line-height:10px;height:10px;color:#a9afc2;transform:scaleX(0.9000);transform-origin:0 0;">10</div>
<div class="t" style="left:399.93px;top:125px;font-size:8.4px;line-height:10px;height:10px;color:#a9afc2;transform:scaleX(0.9000);transform-origin:0 0;">11</div>
<div class="t" style="left:428.00px;top:125px;font-size:8.4px;line-height:10px;height:10px;color:#a9afc2;transform:scaleX(0.9000);transform-origin:0 0;">12</div>
<div class="t" style="left:456.35px;top:125px;font-size:8.4px;line-height:10px;height:10px;color:#a9afc2;transform:scaleX(0.9000);transform-origin:0 0;">13</div>
<div class="t" style="left:484.70px;top:125px;font-size:8.4px;line-height:10px;height:10px;color:#a9afc2;transform:scaleX(0.9000);transform-origin:0 0;">14</div>
<div class="t" style="left:513.05px;top:125px;font-size:8.4px;line-height:10px;height:10px;color:#a9afc2;transform:scaleX(0.9000);transform-origin:0 0;">15</div>
<div class="t" style="left:541.40px;top:125px;font-size:8.4px;line-height:10px;height:10px;color:#a9afc2;transform:scaleX(0.9000);transform-origin:0 0;">16</div>
<div class="t" style="left:569.75px;top:125px;font-size:8.4px;line-height:10px;height:10px;color:#a9afc2;transform:scaleX(0.9000);transform-origin:0 0;">17</div>
<div class="t" style="left:598.10px;top:125px;font-size:8.4px;line-height:10px;height:10px;color:#a9afc2;transform:scaleX(0.9000);transform-origin:0 0;">18</div>
<div class="t" style="left:626.45px;top:125px;font-size:8.4px;line-height:10px;height:10px;color:#a9afc2;transform:scaleX(0.9000);transform-origin:0 0;">19</div>
<div class="abs" style="left:48.8px;top:129.2px;width:1px;height:2.2px;background:#5f626d;"></div>
<div class="abs" style="left:77.1px;top:129.2px;width:1px;height:2.2px;background:#5f626d;"></div>
<div class="abs" style="left:105.5px;top:129.2px;width:1px;height:2.2px;background:#5f626d;"></div>
<div class="abs" style="left:133.8px;top:129.2px;width:1px;height:2.2px;background:#5f626d;"></div>
<div class="abs" style="left:162.2px;top:129.2px;width:1px;height:2.2px;background:#5f626d;"></div>
<div class="abs" style="left:190.5px;top:129.2px;width:1px;height:2.2px;background:#5f626d;"></div>
<div class="abs" style="left:218.9px;top:129.2px;width:1px;height:2.2px;background:#5f626d;"></div>
<div class="abs" style="left:247.2px;top:129.2px;width:1px;height:2.2px;background:#5f626d;"></div>
<div class="abs" style="left:275.6px;top:129.2px;width:1px;height:2.2px;background:#5f626d;"></div>
<div class="abs" style="left:303.9px;top:129.2px;width:1px;height:2.2px;background:#5f626d;"></div>
<div class="abs" style="left:332.3px;top:129.2px;width:1px;height:2.2px;background:#5f626d;"></div>
<div class="abs" style="left:360.6px;top:129.2px;width:1px;height:2.2px;background:#5f626d;"></div>
<div class="abs" style="left:389.0px;top:129.2px;width:1px;height:2.2px;background:#5f626d;"></div>
<div class="abs" style="left:417.3px;top:129.2px;width:1px;height:2.2px;background:#5f626d;"></div>
<div class="abs" style="left:445.7px;top:129.2px;width:1px;height:2.2px;background:#5f626d;"></div>
<div class="abs" style="left:474.0px;top:129.2px;width:1px;height:2.2px;background:#5f626d;"></div>
<div class="abs" style="left:502.4px;top:129.2px;width:1px;height:2.2px;background:#5f626d;"></div>
<div class="abs" style="left:530.7px;top:129.2px;width:1px;height:2.2px;background:#5f626d;"></div>
<div class="abs" style="left:559.1px;top:129.2px;width:1px;height:2.2px;background:#5f626d;"></div>
<div class="abs" style="left:587.4px;top:129.2px;width:1px;height:2.2px;background:#5f626d;"></div>
<div class="abs" style="left:615.8px;top:129.2px;width:1px;height:2.2px;background:#5f626d;"></div>
<div class="abs" style="left:644.1px;top:129.2px;width:1px;height:2.2px;background:#5f626d;"></div>
<div class="abs" style="left:119.7px;top:135.6px;width:1px;height:1px;background:#4a4d59;"></div>
<div class="abs" style="left:119.7px;top:125px;width:1px;height:0.8px;background:#3c3f4b;"></div>
<div class="abs" style="left:148.0px;top:135.6px;width:1px;height:1px;background:#4a4d59;"></div>
<div class="abs" style="left:148.0px;top:125px;width:1px;height:0.8px;background:#3c3f4b;"></div>
<div class="abs" style="left:176.4px;top:135.6px;width:1px;height:1px;background:#4a4d59;"></div>
<div class="abs" style="left:176.4px;top:125px;width:1px;height:0.8px;background:#3c3f4b;"></div>
<div class="abs" style="left:204.7px;top:135.6px;width:1px;height:1px;background:#4a4d59;"></div>
<div class="abs" style="left:204.7px;top:125px;width:1px;height:0.8px;background:#3c3f4b;"></div>
<div class="abs" style="left:233.1px;top:135.6px;width:1px;height:1px;background:#4a4d59;"></div>
<div class="abs" style="left:233.1px;top:125px;width:1px;height:0.8px;background:#3c3f4b;"></div>
<div class="abs" style="left:261.4px;top:135.6px;width:1px;height:1px;background:#4a4d59;"></div>
<div class="abs" style="left:261.4px;top:125px;width:1px;height:0.8px;background:#3c3f4b;"></div>
<div class="abs" style="left:289.8px;top:135.6px;width:1px;height:1px;background:#4a4d59;"></div>
<div class="abs" style="left:289.8px;top:125px;width:1px;height:0.8px;background:#3c3f4b;"></div>
<div class="abs" style="left:318.1px;top:135.6px;width:1px;height:1px;background:#4a4d59;"></div>
<div class="abs" style="left:318.1px;top:125px;width:1px;height:0.8px;background:#3c3f4b;"></div>
<div class="abs" style="left:346.4px;top:135.6px;width:1px;height:1px;background:#4a4d59;"></div>
<div class="abs" style="left:346.4px;top:125px;width:1px;height:0.8px;background:#3c3f4b;"></div>
<div class="abs" style="left:374.8px;top:135.6px;width:1px;height:1px;background:#4a4d59;"></div>
<div class="abs" style="left:374.8px;top:125px;width:1px;height:0.8px;background:#3c3f4b;"></div>
<div class="abs" style="left:403.2px;top:135.6px;width:1px;height:1px;background:#4a4d59;"></div>
<div class="abs" style="left:403.2px;top:125px;width:1px;height:0.8px;background:#3c3f4b;"></div>
<div class="abs" style="left:431.5px;top:135.6px;width:1px;height:1px;background:#4a4d59;"></div>
<div class="abs" style="left:431.5px;top:125px;width:1px;height:0.8px;background:#3c3f4b;"></div>
<div class="abs" style="left:459.9px;top:135.6px;width:1px;height:1px;background:#4a4d59;"></div>
<div class="abs" style="left:459.9px;top:125px;width:1px;height:0.8px;background:#3c3f4b;"></div>
<div class="abs" style="left:488.2px;top:135.6px;width:1px;height:1px;background:#4a4d59;"></div>
<div class="abs" style="left:488.2px;top:125px;width:1px;height:0.8px;background:#3c3f4b;"></div>
<div class="abs" style="left:516.5px;top:135.6px;width:1px;height:1px;background:#4a4d59;"></div>
<div class="abs" style="left:516.5px;top:125px;width:1px;height:0.8px;background:#3c3f4b;"></div>
<div class="abs" style="left:544.9px;top:135.6px;width:1px;height:1px;background:#4a4d59;"></div>
<div class="abs" style="left:544.9px;top:125px;width:1px;height:0.8px;background:#3c3f4b;"></div>
<div class="abs" style="left:573.2px;top:135.6px;width:1px;height:1px;background:#4a4d59;"></div>
<div class="abs" style="left:573.2px;top:125px;width:1px;height:0.8px;background:#3c3f4b;"></div>
<div class="abs" style="left:127px;top:134px;width:1px;height:3px;background:#bfc1ca;"></div>
<div class="abs" style="left:125px;top:136.4px;width:5px;height:1px;background:#c9cbd3;"></div>
<div class="abs" style="left:162px;top:134px;width:1px;height:3px;background:#bfc1ca;"></div>
<div class="abs" style="left:160px;top:136.4px;width:5px;height:1px;background:#c9cbd3;"></div>
<div class="abs" style="left:198px;top:134px;width:1px;height:3px;background:#bfc1ca;"></div>
<div class="abs" style="left:196px;top:136.4px;width:5px;height:1px;background:#c9cbd3;"></div>
<div class="abs" style="left:233px;top:134px;width:1px;height:3px;background:#bfc1ca;"></div>
<div class="abs" style="left:231px;top:136.4px;width:5px;height:1px;background:#c9cbd3;"></div>
<div class="abs" style="left:268px;top:134px;width:1px;height:3px;background:#bfc1ca;"></div>
<div class="abs" style="left:266px;top:136.4px;width:5px;height:1px;background:#c9cbd3;"></div>
<div class="abs" style="left:304px;top:134px;width:1px;height:3px;background:#bfc1ca;"></div>
<div class="abs" style="left:302px;top:136.4px;width:5px;height:1px;background:#c9cbd3;"></div>
<div class="abs" style="left:339px;top:134px;width:1px;height:3px;background:#bfc1ca;"></div>
<div class="abs" style="left:337px;top:136.4px;width:5px;height:1px;background:#c9cbd3;"></div>
<div class="abs" style="left:375px;top:134px;width:1px;height:3px;background:#bfc1ca;"></div>
<div class="abs" style="left:373px;top:136.4px;width:5px;height:1px;background:#c9cbd3;"></div>
<div class="abs" style="left:410px;top:134px;width:1px;height:3px;background:#bfc1ca;"></div>
<div class="abs" style="left:408px;top:136.4px;width:5px;height:1px;background:#c9cbd3;"></div>
<div class="abs" style="left:446px;top:134px;width:1px;height:3px;background:#bfc1ca;"></div>
<div class="abs" style="left:444px;top:136.4px;width:5px;height:1px;background:#c9cbd3;"></div>
<div class="abs" style="left:481px;top:134px;width:1px;height:3px;background:#bfc1ca;"></div>
<div class="abs" style="left:479px;top:136.4px;width:5px;height:1px;background:#c9cbd3;"></div>
<div class="abs" style="left:517px;top:134px;width:1px;height:3px;background:#bfc1ca;"></div>
<div class="abs" style="left:515px;top:136.4px;width:5px;height:1px;background:#c9cbd3;"></div>
<div class="abs" style="left:552px;top:134px;width:1px;height:3px;background:#bfc1ca;"></div>
<div class="abs" style="left:550px;top:136.4px;width:5px;height:1px;background:#c9cbd3;"></div>
<div class="abs" style="left:587px;top:134px;width:1px;height:3px;background:#bfc1ca;"></div>
<div class="abs" style="left:585px;top:136.4px;width:5px;height:1px;background:#c9cbd3;"></div>
<svg class="abs" style="left:87.3px;top:123.7px;" width="9" height="14.2" viewBox="0 0 9 14.2"><path d="M0.6 0.6 H8.4 V1.8 L5 6.6 V7.4 L8.4 12 V13.6 H0.6 V12 L4 7.4 V6.6 L0.6 1.8Z" fill="#161822" stroke="#d9dae0" stroke-width="1"/><path d="M0.8 11.9 H8.2" stroke="#d9dae0" stroke-width="0.8"/></svg>
<svg class="abs" style="left:585.8px;top:130.8px;" width="9" height="7" viewBox="0 0 9 7"><path d="M4.5 0.7 L8.4 5 V6.4 H0.6 V5Z" fill="#161822" stroke="#d9dae0" stroke-width="1"/><path d="M0.8 4.9 H8.2" stroke="#d9dae0" stroke-width="0.8"/></svg>
<div class="abs" style="left:33px;top:153px;width:614px;height:1px;background:#56575e;"></div>
<div class="abs" style="left:33px;top:154px;width:2px;height:366px;background:linear-gradient(90deg,#34363f,#8c8d92);"></div>
<div class="abs" style="left:646px;top:154px;width:1px;height:366px;background:#6a6b72;"></div>
<div id="page" class="abs"></div>
<div class="abs" style="left:81.5px;top:211.4px;width:10.5px;height:1px;background:#d9d9da;"></div>
<div class="abs" style="left:91px;top:202px;width:1px;height:10px;background:#d9d9da;"></div>
<div class="abs" style="left:589px;top:211.4px;width:10.5px;height:1px;background:#d9d9da;"></div>
<div class="abs" style="left:589px;top:202px;width:1px;height:10px;background:#d9d9da;"></div>
<div class="abs" style="left:91px;top:212px;width:1px;height:12.8px;background:#4c4c4e;"></div>
<div class="abs" style="left:684.2px;top:125.6px;width:3.9px;height:179px;background:#7d8092;border-radius:2px"></div>
<svg class="abs" style="left:658.4px;top:409.4px;" width="10.2" height="15.2" viewBox="0 0 10.2 15.2"><path d="M0.8 0.9 V12.4 L3.5 10 L5.4 14.2 L7.2 13.4 L5.4 9.4 L8.8 9.2Z" fill="#0a0a0c" stroke="#e8e8ea" stroke-width="1" stroke-linejoin="round"/></svg>
<!-- p_sidebar -->
<div class="abs" style="left:690px;top:122.4px;width:334px;height:1.6px;background:#444756;"></div>
<div class="abs" style="left:690px;top:519.2px;width:334px;height:1.8px;background:#3b3e4e;"></div>
<div class="abs" style="left:690.2px;top:122px;width:1.3px;height:398px;background:#3b3e4e;"></div>
<div class="abs" style="left:695px;top:123px;width:1.2px;height:396px;background:#343746;"></div>
<div class="abs" style="left:691.5px;top:123.6px;width:3.5px;height:395px;background:#0e1018;"></div>
<div class="abs" style="left:690.4px;top:293.2px;width:5.2px;height:55px;background:#b9bbcc;"></div>
<svg class="abs" style="left:690.8px;top:317.8px;" width="4.4" height="5.6" viewBox="0 0 4.4 5.6"><path d="M0.3 0 L4.2 2.8 L0.3 5.6Z" fill="#14151c"/></svg>
<div class="abs" style="left:696.2px;top:123.6px;width:3.3px;height:395px;background:#0e1018;"></div>
<div class="abs" style="left:699.5px;top:123.6px;width:294px;height:392px;background:#13151e;"></div>
<div class="abs" style="left:993.5px;top:123.6px;width:30.5px;height:395px;background:#161822;"></div>
<div class="abs" style="left:699.5px;top:124.6px;width:284.5px;height:20.2px;background:#141620;"></div>
<div class="abs" style="left:702.8px;top:130px;width:1.6px;height:11.4px;background:repeating-linear-gradient(#8a8c98 0 1.4px,transparent 1.4px 2.8px);"></div>
<div class="t" style="left:718.50px;top:131px;font-size:10px;line-height:12px;height:12px;color:#ced0da;font-weight:bold;transform:scaleX(0.9930);transform-origin:0 0;">Propiedades</div>
<svg class="abs" style="left:985px;top:134px;" width="4.6" height="4.8" viewBox="0 0 4.6 4.8"><path d="M0.3 0.3 L4.3 4.5 M4.3 0.3 L0.3 4.5" stroke="#565964" stroke-width="0.8"/></svg>
<div class="abs" style="left:699.5px;top:144.8px;width:284.5px;height:371px;background:#161822;"></div>
<div class="abs" style="left:986.4px;top:148.8px;width:4.2px;height:354px;background:#7d8092;border-radius:2px"></div>
<div class="abs" style="left:699.5px;top:144.8px;width:284.5px;height:22px;background:linear-gradient(#07080e,#0c0d15 25%,#161822);"></div>
<svg class="abs" style="left:703.4px;top:152.2px;" width="6.8" height="6.8" viewBox="0 0 6.8 6.8"><circle cx="3.4" cy="3.4" r="3.3" fill="#e4e5e9"/><path d="M1.7 3 L3.4 4.7 L5.1 3" stroke="#2a2c36" stroke-width="1" fill="none"/></svg>
<div class="t" style="left:714.70px;top:151px;font-size:10px;line-height:12px;height:12px;color:#d2d4dd;font-weight:bold;transform:scaleX(0.9512);transform-origin:0 0;">Estilo</div>
<div class="combo" style="left:707.7px;top:173.8px;width:206.2px;height:21px"></div><div class="abs" style="left:892.4px;top:174.3px;width:1px;height:20px;background:#1f2230;"></div>
<div class="t" style="left:713.90px;top:178px;font-size:11.6px;line-height:14px;height:14px;color:#ccced8;transform:scaleX(0.9991);transform-origin:0 0;">Estilo de párrafo predeterminado</div>
<svg class="abs" style="left:900px;top:183.2px;" width="7" height="3.7" viewBox="0 0 7 3.7"><path d="M0 0 H7 L3.5 3.2Z" fill="#e6e7ec"/></svg>
<div class="t" style="left:932.60px;top:178px;font-size:12.6px;line-height:15px;height:15px;color:#505157;font-style:italic;transform:scaleX(0.8805);transform-origin:0 0;">A</div>
<svg class="abs" style="left:935.4px;top:178.6px;" width="10" height="12" viewBox="0 0 10 12"><circle cx="4.8" cy="7.4" r="3.6" fill="#3f8fe6"/><path d="M3 7.8 A2 2 0 1 1 5.4 9.3" stroke="#eaf2fc" stroke-width="1.1" fill="none"/><path d="M6.2 2.8 L8.6 0.8 L8.4 4.4Z" fill="#f08a18"/><circle cx="0.4" cy="11" r="0.8" fill="#d63ad0"/></svg>
<div class="t" style="left:958.60px;top:178px;font-size:12.6px;line-height:15px;height:15px;color:#505157;font-style:italic;transform:scaleX(0.8805);transform-origin:0 0;">A</div>
<svg class="abs" style="left:961.4px;top:178.6px;" width="10" height="12" viewBox="0 0 10 12"><path d="M4.4 4.4 H6.8 V6.6 H9 V9 H6.8 V11.2 H4.4 V9 H2.2 V6.6 H4.4Z" fill="#52b944" stroke="#8fdc80" stroke-width="0.35"/><path d="M6.4 2.8 L8.8 0.8 L8.6 4.4Z" fill="#f08a18"/><circle cx="0.6" cy="11" r="0.8" fill="#d63ad0"/></svg>
<div class="abs" style="left:699.5px;top:202.4px;width:284.5px;height:22px;background:linear-gradient(#07080e,#0c0d15 25%,#161822);"></div>
<svg class="abs" style="left:703.4px;top:210px;" width="6.8" height="6.8" viewBox="0 0 6.8 6.8"><circle cx="3.4" cy="3.4" r="3.3" fill="#e4e5e9"/><path d="M1.7 3 L3.4 4.7 L5.1 3" stroke="#2a2c36" stroke-width="1" fill="none"/></svg>
<div class="t" style="left:714.70px;top:209px;font-size:10px;line-height:12px;height:12px;color:#d2d4dd;font-weight:bold;transform:scaleX(1.0374);transform-origin:0 0;">Carácter</div>
<svg class="abs" style="left:972.8px;top:210.4px;" width="8.4" height="8.4" viewBox="-6.2 -6.2 12.4 12.4"><path fill-rule="evenodd" fill="#dcdde1" d="M5.91,-1.03 L5.91,1.03 L4.34,1.19 L3.91,2.23 L4.91,3.45 L3.45,4.91 L2.23,3.91 L1.19,4.34 L1.03,5.91 L-1.03,5.91 L-1.19,4.34 L-2.23,3.91 L-3.45,4.91 L-4.91,3.45 L-3.91,2.23 L-4.34,1.19 L-5.91,1.03 L-5.91,-1.03 L-4.34,-1.19 L-3.91,-2.23 L-4.91,-3.45 L-3.45,-4.91 L-2.23,-3.91 L-1.19,-4.34 L-1.03,-5.91 L1.03,-5.91 L1.19,-4.34 L2.23,-3.91 L3.45,-4.91 L4.91,-3.45 L3.91,-2.23 L4.34,-1.19Z M2.1 0 A2.1 2.1 0 1 0 -2.1 0 A2.1 2.1 0 1 0 2.1 0Z"/></svg>
<div class="combo" style="left:707.7px;top:230.8px;width:186px;height:21.4px"></div><div class="abs" style="left:872px;top:231.3px;width:1px;height:20.4px;background:#1f2230;"></div>
<div class="t" style="left:713.90px;top:236px;font-size:11.6px;line-height:14px;height:14px;color:#ccced8;transform:scaleX(0.9881);transform-origin:0 0;">Liberation Serif</div>
<svg class="abs" style="left:879.4px;top:240.2px;" width="7" height="3.7" viewBox="0 0 7 3.7"><path d="M0 0 H7 L3.5 3.2Z" fill="#e6e7ec"/></svg>
<div class="combo" style="left:905.8px;top:230.8px;width:70.6px;height:21.4px"></div><div class="abs" style="left:954.2px;top:231.3px;width:1px;height:20.4px;background:#1f2230;"></div>
<div class="t" style="left:912.10px;top:236px;font-size:11.6px;line-height:14px;height:14px;color:#ccced8;transform:scaleX(0.9651);transform-origin:0 0;">12 pt</div>
<svg class="abs" style="left:962px;top:240.2px;" width="7" height="3.7" viewBox="0 0 7 3.7"><path d="M0 0 H7 L3.5 3.2Z" fill="#e6e7ec"/></svg>
<div class="t" style="left:715.40px;top:264px;font-size:13px;line-height:16px;height:16px;color:#4b4b4f;transform:scaleX(0.9160);transform-origin:0 0;">N</div>
<div class="t" style="left:741.80px;top:264px;font-size:13px;line-height:16px;height:16px;color:#37373b;font-style:italic;transform:scaleX(0.9226);transform-origin:0 0;">K</div>
<div class="t" style="left:768.80px;top:264px;font-size:12.6px;line-height:15px;height:15px;color:#3f3f43;transform:scaleX(0.8329);transform-origin:0 0;">S</div>
<div class="abs" style="left:768.4px;top:276.2px;width:7.6px;height:1px;background:#5a5d68;"></div>
<svg class="abs" style="left:789.2px;top:269.9px;" width="6.6" height="3.7" viewBox="0 0 6.6 3.7"><path d="M0 0 H6.6 L3.3 3.2Z" fill="#e6e7ec"/></svg>
<div class="t" style="left:808.20px;top:265px;font-size:12.6px;line-height:15px;height:15px;color:#4b4b4f;transform:scaleX(0.8805);transform-origin:0 0;">S</div>
<div class="abs" style="left:806.8px;top:270.6px;width:10.4px;height:1px;background:#5a5d68;"></div>
<div class="t" style="left:832.90px;top:265px;font-size:12px;line-height:14px;height:14px;color:#4f525d;transform:scaleX(1.0120);transform-origin:0 0;">A</div>
<div class="t" style="left:836.60px;top:265px;font-size:12px;line-height:14px;height:14px;color:#5b5e69;transform:scaleX(0.9495);transform-origin:0 0;">A</div>
<div class="t" style="left:932.80px;top:266px;font-size:11.6px;line-height:14px;height:14px;color:#5a5b61;transform:scaleX(1.0598);transform-origin:0 0;">A</div>
<svg class="abs" style="left:938.6px;top:265.2px;" width="5.4" height="2.6" viewBox="0 0 5.4 2.6"><path d="M0 2.4 L2.7 0 L5.4 2.4Z" fill="#3b9df0"/></svg>
<div class="t" style="left:958.80px;top:268px;font-size:9px;line-height:11px;height:11px;color:#505157;transform:scaleX(1.0661);transform-origin:0 0;">A</div>
<svg class="abs" style="left:964.8px;top:265.2px;" width="5.2" height="2.6" viewBox="0 0 5.2 2.6"><path d="M0 0 H5.2 L2.6 2.4Z" fill="#b56cf0"/></svg>
<div class="t" style="left:716.00px;top:293px;font-size:10.2px;line-height:12px;height:12px;color:#727378;transform:scaleX(1.1171);transform-origin:0 0;">A</div>
<div class="abs" style="left:713.4px;top:301.8px;width:12.6px;height:2.8px;background:#cc1f2a;"></div>
<svg class="abs" style="left:736.6px;top:297px;" width="7" height="4.1" viewBox="0 0 7 4.1"><path d="M0 0 H7 L3.5 3.6Z" fill="#e6e7ec"/></svg>
<svg class="abs" style="left:753px;top:292.8px;" width="13" height="12" viewBox="0 0 13 12"><path d="M8.6 0.4 L11.6 2.8 L7.2 7.4 L4.6 5.2Z" fill="#f0b24a"/><path d="M4.6 5.2 L7.2 7.4 L5.6 8.6 L3.6 7Z" fill="#8f98b4"/><path d="M3.6 7 L5.6 8.6 L3 9.2Z" fill="#c9cbd2"/><rect x="0" y="9" width="12.6" height="2.8" fill="#f4ec10"/></svg>
<svg class="abs" style="left:776.2px;top:297px;" width="7" height="4.1" viewBox="0 0 7 4.1"><path d="M0 0 H7 L3.5 3.6Z" fill="#e6e7ec"/></svg>
<svg class="abs" style="left:803.6px;top:293.4px;" width="13" height="12.4" viewBox="0 0 13 12.4"><path d="M0.6 10.6 L5.4 0.8 H6.4 L7.6 7" stroke="#56575f" stroke-width="1.2" fill="none"/><path d="M2.8 7 H7" stroke="#56575f" stroke-width="1"/><path d="M7.4 6 L12.2 6 L9.8 11.2 L5 11.2Z" fill="#f47fb0"/></svg>
<div class="t" style="left:882.80px;top:294px;font-size:10.4px;line-height:12px;height:12px;color:#4d505b;transform:scaleX(0.9508);transform-origin:0 0;">ab</div>
<svg class="abs" style="left:882.8px;top:300.2px;" width="11.2" height="5" viewBox="0 0 11.2 5"><path d="M0 0 L2.8 2.4 L0 4.8Z M11.2 0 L8.4 2.4 L11.2 4.8Z" fill="#f08a18"/></svg>
<svg class="abs" style="left:905.2px;top:297px;" width="7" height="4.1" viewBox="0 0 7 4.1"><path d="M0 0 H7 L3.5 3.6Z" fill="#e6e7ec"/></svg>
<div class="t" style="left:932.80px;top:295px;font-size:11px;line-height:13px;height:13px;color:#5b5e69;transform:scaleX(1.0086);transform-origin:0 0;">A</div>
<div class="t" style="left:939.00px;top:291px;font-size:8.8px;line-height:11px;height:11px;color:#f08a1c;font-weight:bold;transform:scaleX(1.0624);transform-origin:0 0;-webkit-text-stroke:0.3px #f08a1c;">2</div>
<div class="t" style="left:958.80px;top:292px;font-size:11px;line-height:13px;height:13px;color:#5b5e69;transform:scaleX(1.0086);transform-origin:0 0;">A</div>
<div class="t" style="left:965.20px;top:297px;font-size:8.8px;line-height:11px;height:11px;color:#f08a1c;font-weight:bold;transform:scaleX(1.0624);transform-origin:0 0;-webkit-text-stroke:0.3px #f08a1c;">2</div>
<div class="abs" style="left:699.5px;top:315.8px;width:284.5px;height:22px;background:linear-gradient(#07080e,#0c0d15 25%,#161822);"></div>
<svg class="abs" style="left:703.4px;top:323px;" width="6.8" height="6.8" viewBox="0 0 6.8 6.8"><circle cx="3.4" cy="3.4" r="3.3" fill="#e4e5e9"/><path d="M1.7 3 L3.4 4.7 L5.1 3" stroke="#2a2c36" stroke-width="1" fill="none"/></svg>
<div class="t" style="left:714.70px;top:322px;font-size:10px;line-height:12px;height:12px;color:#d2d4dd;font-weight:bold;transform:scaleX(1.0338);transform-origin:0 0;">Párrafo</div>
<svg class="abs" style="left:972.8px;top:323.4px;" width="8.4" height="8.4" viewBox="-6.2 -6.2 12.4 12.4"><path fill-rule="evenodd" fill="#dcdde1" d="M5.91,-1.03 L5.91,1.03 L4.34,1.19 L3.91,2.23 L4.91,3.45 L3.45,4.91 L2.23,3.91 L1.19,4.34 L1.03,5.91 L-1.03,5.91 L-1.19,4.34 L-2.23,3.91 L-3.45,4.91 L-4.91,3.45 L-3.91,2.23 L-4.34,1.19 L-5.91,1.03 L-5.91,-1.03 L-4.34,-1.19 L-3.91,-2.23 L-4.91,-3.45 L-3.45,-4.91 L-2.23,-3.91 L-1.19,-4.34 L-1.03,-5.91 L1.03,-5.91 L1.19,-4.34 L2.23,-3.91 L3.45,-4.91 L4.91,-3.45 L3.91,-2.23 L4.34,-1.19Z M2.1 0 A2.1 2.1 0 1 0 -2.1 0 A2.1 2.1 0 1 0 2.1 0Z"/></svg>
<div class="abs" style="left:707.2px;top:343.8px;width:25px;height:19px;background:#b616be;border-radius:2.5px"></div>
<svg class="abs" style="left:714.2px;top:350px;" width="11" height="9" viewBox="0 0 11 9"><rect x="0" y="0.0" width="10.6" height="1.15" fill="#f6e9f7"/><rect x="0" y="2.3" width="7.4" height="1.15" fill="#f6e9f7"/><rect x="0" y="4.6" width="10.6" height="1.15" fill="#f6e9f7"/><rect x="0" y="6.8999999999999995" width="6.6" height="1.15" fill="#f6e9f7"/></svg>
<svg class="abs" style="left:740.5px;top:350px;" width="11" height="9" viewBox="0 0 11 9"><rect x="0" y="0.0" width="10.6" height="1.15" fill="#d4d5da"/><rect x="1.6" y="2.3" width="7.6" height="1.15" fill="#d4d5da"/><rect x="0" y="4.6" width="10.6" height="1.15" fill="#d4d5da"/><rect x="1.6" y="6.8999999999999995" width="7.6" height="1.15" fill="#d4d5da"/></svg>
<svg class="abs" style="left:766.8px;top:350px;" width="11" height="9" viewBox="0 0 11 9"><rect x="0" y="0.0" width="10.6" height="1.15" fill="#d4d5da"/><rect x="3" y="2.3" width="7.6" height="1.15" fill="#d4d5da"/><rect x="0" y="4.6" width="10.6" height="1.15" fill="#d4d5da"/><rect x="3" y="6.8999999999999995" width="7.6" height="1.15" fill="#d4d5da"/></svg>
<svg class="abs" style="left:792.8px;top:350px;" width="11" height="9" viewBox="0 0 11 9"><rect x="0" y="0.0" width="10.6" height="1.15" fill="#d4d5da"/><rect x="0" y="2.3" width="10.6" height="1.15" fill="#d4d5da"/><rect x="0" y="4.6" width="10.6" height="1.15" fill="#d4d5da"/><rect x="0" y="6.8999999999999995" width="10.6" height="1.15" fill="#d4d5da"/></svg>
<svg class="abs" style="left:714.4px;top:377.2px;" width="11.5" height="9" viewBox="0 0 11.5 9"><rect x="2.8" y="0.0" width="7.8" height="1.1" fill="#d2d3d9"/><rect x="2.8" y="2.35" width="4.7" height="1.1" fill="#d2d3d9"/><rect x="2.8" y="4.7" width="7.8" height="1.1" fill="#d2d3d9"/><rect x="2.8" y="7.050000000000001" width="4.7" height="1.1" fill="#d2d3d9"/><rect x="0" y="0.6" width="1.7" height="1.7" fill="#b9bbc3"/><rect x="0" y="5.2" width="1.7" height="1.7" fill="#b9bbc3"/></svg>
<svg class="abs" style="left:754px;top:377.2px;" width="11.5" height="9" viewBox="0 0 11.5 9"><rect x="2.8" y="0.0" width="7.8" height="1.1" fill="#d2d3d9"/><rect x="2.8" y="2.35" width="4.7" height="1.1" fill="#d2d3d9"/><rect x="2.8" y="4.7" width="7.8" height="1.1" fill="#d2d3d9"/><rect x="2.8" y="7.050000000000001" width="4.7" height="1.1" fill="#d2d3d9"/><rect x="0.4" y="-0.6" width="0.8" height="3.6" fill="#666975"/><rect x="0.4" y="4.4" width="0.8" height="3.6" fill="#666975"/></svg>
<svg class="abs" style="left:736.6px;top:379.9px;" width="7" height="3.9" viewBox="0 0 7 3.9"><path d="M0 0 H7 L3.5 3.4Z" fill="#e6e7ec"/></svg>
<svg class="abs" style="left:776.2px;top:379.9px;" width="7" height="3.9" viewBox="0 0 7 3.9"><path d="M0 0 H7 L3.5 3.4Z" fill="#e6e7ec"/></svg>
<svg class="abs" style="left:900px;top:374.6px;" width="12" height="12.6" viewBox="0 0 12 12.6"><ellipse cx="6.8" cy="4.8" rx="4.4" ry="4.4" fill="#9a9ca4"/><ellipse cx="7.8" cy="4.2" rx="2.6" ry="3" fill="#e8e8ea"/><path d="M2.6 3.4 Q1.4 6 3 8.6 L4.6 7Z" fill="#6a6c74"/><path d="M0.2 10.2 H10.4 V12.2 H0.2Z" fill="#f08a18"/><path d="M4 8 L6 10.2 H3Z" fill="#f08a18"/></svg>
<div class="abs" style="left:912.8px;top:375.9px;width:45px;height:10px;background:transparent;border:1px solid #8b8d96"></div>
<svg class="abs" style="left:967px;top:379.9px;" width="7" height="3.9" viewBox="0 0 7 3.9"><path d="M0 0 H7 L3.5 3.4Z" fill="#e6e7ec"/></svg>
<div class="abs" style="left:704px;top:395.8px;width:276px;height:1px;background:#1a1c28;"></div>
<div class="t" style="left:704.40px;top:401px;font-size:11px;line-height:13px;height:13px;color:#c9cbd2;transform:scaleX(0.9720);transform-origin:0 0;">Espaciado:</div>
<div class="t" style="left:844.10px;top:401px;font-size:11px;line-height:13px;height:13px;color:#c9cbd2;transform:scaleX(1.0004);transform-origin:0 0;">Sangría:</div>
<svg class="abs" style="left:715px;top:425.4px;" width="10" height="7.4" viewBox="0 0 10 7.4"><path d="M0 2.8 L2 0.2 L4 2.8Z M0 4.4 L2 7 L4 4.4Z" fill="#3b9df0"/><rect x="5.4" y="0.9" width="4.4" height="1.1" fill="#c9cad0"/><rect x="5.4" y="3.1999999999999997" width="4.4" height="1.1" fill="#c9cad0"/><rect x="5.4" y="5.5" width="4.4" height="1.1" fill="#c9cad0"/></svg>
<svg class="abs" style="left:741px;top:425.4px;" width="10" height="7.4" viewBox="0 0 10 7.4"><path d="M0 0.4 H4 L2 2.8Z M0 6.8 H4 L2 4.4Z" fill="#5b3f9a"/><path d="M0 3.6 H4.2" stroke="#6b4fb0" stroke-width="0.7"/><rect x="5.4" y="0.9" width="4.4" height="1.1" fill="#5a5d68"/><rect x="5.4" y="3.1999999999999997" width="4.4" height="1.1" fill="#5a5d68"/><rect x="5.4" y="5.5" width="4.4" height="1.1" fill="#5a5d68"/></svg>
<svg class="abs" style="left:854.2px;top:423.8px;" width="11.6" height="9.4" viewBox="0 0 11.6 9.4"><rect x="0" y="0.9" width="4.4" height="1.2" fill="#cfd0d6"/><rect x="0" y="6.7" width="4.4" height="1" fill="#cfd0d6"/><rect x="0" y="8.5" width="4.4" height="1" fill="#cfd0d6"/><rect x="6.4" y="0.9" width="5" height="1.2" fill="#cfd0d6"/><rect x="6.4" y="3" width="5" height="1.1" fill="#cfd0d6"/><rect x="5.8" y="6.1" width="5.6" height="1.1" fill="#cfd0d6"/><rect x="6.4" y="8.3" width="3.4" height="1.1" fill="#cfd0d6"/><rect x="5.6" y="-0.4" width="0.9" height="1.1" fill="#c9cad0"/><path d="M0 3.2 H3.2 V2 L5.8 4 L3.2 6 V4.8 H0Z" fill="#2f8be8"/></svg>
<svg class="abs" style="left:880.8px;top:423.8px;" width="11.6" height="9.4" viewBox="0 0 11.6 9.4"><rect x="0" y="0.9" width="4.4" height="1.2" fill="#cfd0d6"/><rect x="0" y="6.7" width="4.4" height="1" fill="#cfd0d6"/><rect x="0" y="8.5" width="4.4" height="1" fill="#cfd0d6"/><rect x="6.4" y="0.9" width="5" height="1.2" fill="#cfd0d6"/><rect x="6.4" y="3" width="5" height="1.1" fill="#cfd0d6"/><rect x="5.8" y="6.1" width="5.6" height="1.1" fill="#cfd0d6"/><rect x="6.4" y="8.3" width="3.4" height="1.1" fill="#cfd0d6"/><rect x="5.6" y="-0.4" width="0.9" height="1.1" fill="#c9cad0"/><path d="M5.8 3.2 H2.6 V2 L0 4 L2.6 6 V4.8 H5.8Z" fill="#a45be6"/></svg>
<svg class="abs" style="left:907px;top:423.6px;" width="11.2" height="8.6" viewBox="0 0 11.2 8.6"><rect x="0" y="0" width="11.2" height="1.1" fill="#c9cad0"/><rect x="6.6" y="2.5" width="4.6" height="1.1" fill="#c9cad0"/><rect x="6.6" y="5" width="4.6" height="1.1" fill="#c9cad0"/><rect x="6.6" y="7.5" width="4.6" height="1.1" fill="#c9cad0"/><path d="M0 3.4 H3 V2 L5.8 4.2 L3 6.4 V5 H0Z" fill="#2f8be8"/></svg>
<div class="combo" style="left:720.6px;top:443.5px;width:118.5px;height:24.2px;background:#13151e"></div><div class="abs" style="left:795.6px;top:444.0px;width:1px;height:23.2px;background:#1b1d29;"></div><div class="abs" style="left:818.2px;top:444.0px;width:1px;height:23.2px;background:#1b1d29;"></div><div class="abs" style="left:801.9px;top:455.7px;width:8.8px;height:1px;background:#33363f;"></div><div class="abs" style="left:824.0px;top:455.7px;width:8.4px;height:1px;background:#b7b9c0;"></div><div class="abs" style="left:827.7px;top:452.0px;width:1px;height:8.4px;background:#b7b9c0;"></div>
<div class="combo" style="left:720.6px;top:471.6px;width:118.5px;height:23.8px;background:#13151e"></div><div class="abs" style="left:795.6px;top:472.1px;width:1px;height:22.8px;background:#1b1d29;"></div><div class="abs" style="left:818.2px;top:472.1px;width:1px;height:22.8px;background:#1b1d29;"></div><div class="abs" style="left:801.9px;top:483.6px;width:8.8px;height:1px;background:#33363f;"></div><div class="abs" style="left:824.0px;top:483.6px;width:8.4px;height:1px;background:#b7b9c0;"></div><div class="abs" style="left:827.7px;top:479.9px;width:1px;height:8.4px;background:#b7b9c0;"></div>
<div class="t" style="left:727.20px;top:450px;font-size:11.6px;line-height:14px;height:14px;color:#ccced8;transform:scaleX(0.9427);transform-origin:0 0;">0,00 cm</div>
<div class="t" style="left:727.20px;top:478px;font-size:11.6px;line-height:14px;height:14px;color:#ccced8;transform:scaleX(0.9427);transform-origin:0 0;">0,00 cm</div>
<div class="combo" style="left:861.5px;top:443.5px;width:117.4px;height:24.2px;background:#13151e"></div><div class="abs" style="left:936.6px;top:444.0px;width:1px;height:23.2px;background:#1b1d29;"></div><div class="abs" style="left:958.3px;top:444.0px;width:1px;height:23.2px;background:#1b1d29;"></div><div class="abs" style="left:942.5px;top:455.7px;width:8.8px;height:1px;background:#a3a5ad;"></div><div class="abs" style="left:963.9px;top:455.7px;width:8.4px;height:1px;background:#b7b9c0;"></div><div class="abs" style="left:967.6px;top:452.0px;width:1px;height:8.4px;background:#b7b9c0;"></div>
<div class="combo" style="left:861.5px;top:471.6px;width:117.4px;height:23.8px;background:#13151e"></div><div class="abs" style="left:936.6px;top:472.1px;width:1px;height:22.8px;background:#1b1d29;"></div><div class="abs" style="left:958.3px;top:472.1px;width:1px;height:22.8px;background:#1b1d29;"></div><div class="abs" style="left:942.5px;top:483.6px;width:8.8px;height:1px;background:#7f818a;"></div><div class="abs" style="left:963.9px;top:483.6px;width:8.4px;height:1px;background:#b7b9c0;"></div><div class="abs" style="left:967.6px;top:479.9px;width:1px;height:8.4px;background:#b7b9c0;"></div>
<div class="abs" style="left:861.5px;top:499.4px;width:117.4px;height:16px;overflow:hidden"><div style="position:absolute;left:-861.5px;top:-499.4px"><div class="combo" style="left:861.5px;top:499.4px;width:117.4px;height:24px;background:#13151e"></div><div class="abs" style="left:936.6px;top:499.9px;width:1px;height:23px;background:#1b1d29;"></div><div class="abs" style="left:958.3px;top:499.9px;width:1px;height:23px;background:#1b1d29;"></div><div class="abs" style="left:942.5px;top:511.5px;width:8.8px;height:1px;background:#a3a5ad;"></div><div class="abs" style="left:963.9px;top:511.5px;width:8.4px;height:1px;background:#b7b9c0;"></div><div class="abs" style="left:967.6px;top:507.8px;width:1px;height:8.4px;background:#b7b9c0;"></div><div class="t" style="left:867.40px;top:506px;font-size:11.6px;line-height:14px;height:14px;color:#ccced8;transform:scaleX(0.9427);transform-origin:0 0;">0,00 cm</div></div></div>
<div class="t" style="left:867.40px;top:450px;font-size:11.6px;line-height:14px;height:14px;color:#ccced8;transform:scaleX(0.9427);transform-origin:0 0;">0,00 cm</div>
<div class="t" style="left:867.40px;top:478px;font-size:11.6px;line-height:14px;height:14px;color:#ccced8;transform:scaleX(0.9427);transform-origin:0 0;">0,00 cm</div>
<svg class="abs" style="left:704.4px;top:450.6px;" width="11.2" height="11.4" viewBox="0 0 11.2 11.4"><path d="M4 0.4 H7.2 M4 5.6 H7.2 M5.6 0.4 V5.6" stroke="#3b9df0" stroke-width="1.1"/><rect x="0" y="7.4" width="11" height="1.1" fill="#c9cad0"/><rect x="0" y="10" width="11" height="1.1" fill="#c9cad0"/></svg>
<svg class="abs" style="left:704.4px;top:478.4px;" width="11.2" height="10.4" viewBox="0 0 11.2 10.4"><rect x="0" y="0.2" width="11" height="1.1" fill="#c9cad0"/><rect x="0" y="2.8" width="11" height="1.1" fill="#c9cad0"/><path d="M4 5 H7.2 M4 10 H7.2 M5.6 5 V10" stroke="#b56cf0" stroke-width="1.1"/></svg>
<svg class="abs" style="left:845px;top:451.6px;" width="11" height="8.2" viewBox="0 0 11 8.2"><rect x="0" y="0" width="11" height="1.1" fill="#c9cad0"/><rect x="5.6" y="2.4" width="5.4" height="1.1" fill="#c9cad0"/><rect x="5.6" y="4.8" width="5.4" height="1.1" fill="#c9cad0"/><rect x="0" y="7.2" width="11" height="1.1" fill="#c9cad0"/><path d="M0 2.2 V5.8 M4.8 2.2 V5.8 M0 4 H4.8" stroke="#3b9df0" stroke-width="1.1"/></svg>
<svg class="abs" style="left:845px;top:479.4px;" width="11" height="8.2" viewBox="0 0 11 8.2"><rect x="0" y="0" width="11" height="1.1" fill="#c9cad0"/><rect x="0" y="2.4" width="5.4" height="1.1" fill="#c9cad0"/><rect x="0" y="4.8" width="5.4" height="1.1" fill="#c9cad0"/><rect x="0" y="7.2" width="11" height="1.1" fill="#c9cad0"/><path d="M6.2 2.2 V5.8 M11 2.2 V5.8 M6.2 4 H11" stroke="#b56cf0" stroke-width="1.1"/></svg>
<svg class="abs" style="left:845px;top:506.4px;" width="11" height="9" viewBox="0 0 11 9"><path d="M0 0.2 V3.8 M4.8 0.2 V3.8 M0 2 H4.8" stroke="#3b9df0" stroke-width="1.1"/><rect x="6" y="1.6" width="4" height="1.1" fill="#c9cad0"/><rect x="1.4" y="4.2" width="9.6" height="1.1" fill="#c9cad0"/><rect x="1.4" y="6.6" width="9.6" height="1.1" fill="#c9cad0"/></svg>
<svg class="abs" style="left:714.4px;top:509px;" width="11" height="6.4" viewBox="0 0 11 6.4"><rect x="0" y="0.0" width="10.6" height="1.1" fill="#d4d5da"/><rect x="0" y="2.2" width="10.6" height="1.1" fill="#d4d5da"/><rect x="0" y="4.4" width="10.6" height="1.1" fill="#d4d5da"/></svg>
<svg class="abs" style="left:736.6px;top:510.4px;" width="7" height="3.7" viewBox="0 0 7 3.7"><path d="M0 0 H7 L3.5 3.2Z" fill="#e6e7ec"/></svg>
<div class="abs" style="left:699px;top:515.2px;width:283px;height:1px;background:repeating-linear-gradient(90deg,#70727e 0 3px,transparent 3px 6.2px);"></div>
<svg class="abs" style="left:1000.8px;top:128.8px;" width="16.6" height="16.6" viewBox="-6.4 -6.4 12.8 12.8"><path fill-rule="evenodd" fill="#d3d4d8" d="M5.91,-1.03 L5.91,1.03 L4.82,1.32 L4.34,2.48 L4.91,3.45 L3.45,4.91 L2.48,4.34 L1.32,4.82 L1.03,5.91 L-1.03,5.91 L-1.32,4.82 L-2.48,4.34 L-3.45,4.91 L-4.91,3.45 L-4.34,2.48 L-4.82,1.32 L-5.91,1.03 L-5.91,-1.03 L-4.82,-1.32 L-4.34,-2.48 L-4.91,-3.45 L-3.45,-4.91 L-2.48,-4.34 L-1.32,-4.82 L-1.03,-5.91 L1.03,-5.91 L1.32,-4.82 L2.48,-4.34 L3.45,-4.91 L4.91,-3.45 L4.34,-2.48 L4.82,-1.32Z M2.7 0 A2.7 2.7 0 1 0 -2.7 0 A2.7 2.7 0 1 0 2.7 0Z"/></svg>
<div class="abs" style="left:997.2px;top:153.8px;width:23.6px;height:24px;background:#13151d;border:1px solid #e2e3e8;border-radius:2.5px"></div>
<svg class="abs" style="left:1002.2px;top:158.8px;" width="14" height="14" viewBox="0 0 14 14"><rect x="0" y="0" width="13.8" height="13.8" fill="#dedfe3"/><rect x="1.6" y="4" width="10.2" height="5.2" rx="2.6" fill="#2f8be8"/><circle cx="9.4" cy="6.6" r="2" fill="#f4f6fa"/></svg>
<div class="abs" style="left:1003px;top:184.8px;width:12.2px;height:15.4px;background:linear-gradient(#f0f0f1,#dcdcde);"></div>
<svg class="abs" style="left:1001px;top:210px;" width="18" height="18" viewBox="0 0 18 18"><path d="M0.6 12 L5.4 0.8 H6.6 L11.2 12 M2.6 8 H9.2" stroke="#71747e" stroke-width="1.3" fill="none"/><path d="M16.4 4.6 L17.6 5.8 L12 13.2 L10.6 12Z" fill="#e8e8ea"/><path d="M15 6 L17.4 3 L17.8 5.4Z" fill="#f08a18"/><path d="M10.6 12 L12 13.2 L10.4 15.8 L7.6 17 L8.6 14.2Z" fill="#c2542a"/><circle cx="8" cy="16.6" r="1.2" fill="#e03ad6"/></svg>
<svg class="abs" style="left:1001.6px;top:238px;" width="16" height="14" viewBox="0 0 16 14"><path d="M1.6 0.4 L15 1.6 L14.4 3 H1Z" fill="#e8e8ea"/><rect x="0.6" y="2.4" width="14.8" height="11.2" fill="#f2f2f2"/><rect x="1.8" y="3.6" width="12.4" height="4.6" fill="#4a9be8"/><rect x="1.8" y="8.2" width="12.4" height="4.2" fill="#f0bd45"/><path d="M5.6 6.6 L7 8.8 H4.2Z" fill="#e25c2a"/></svg>
<svg class="abs" style="left:1000.8px;top:262.6px;" width="16.2" height="16.2" viewBox="0 0 16.2 16.2"><circle cx="8.1" cy="8.1" r="7.2" fill="#b8bac2" stroke="#e4e5e9" stroke-width="1.6"/><circle cx="8.1" cy="8.1" r="5.4" fill="#6d7a96"/><path d="M11.6 3.6 L9 9 L7.2 7.2Z" fill="#e8483a"/><path d="M4.6 12.6 L7.2 7.2 L9 9Z" fill="#f2f3f6"/></svg>
<svg class="abs" style="left:1000.6px;top:288.2px;" width="16" height="17" viewBox="0 0 16 17"><path d="M0.8 3.4 L6.6 1 L9.6 3.6 L5.4 7.2 L2 6.4Z" fill="#f0c878"/><path d="M2 2 L3.2 3 M5 0.6 L5.6 2.2 M8.4 1.4 L7.6 2.8 M1 5.6 L2.6 5.4" stroke="#f4a640" stroke-width="1"/><path d="M9 3.8 L15.4 15.8" stroke="#8a8c94" stroke-width="1.4"/><path d="M8 2.6 L9.8 5.4" stroke="#e8e8ea" stroke-width="2"/></svg>
<div class="t" style="left:1002.60px;top:296px;font-size:11px;line-height:13px;height:13px;color:#6b6e79;transform:scaleX(1.0461);transform-origin:0 0;">a</div>
<svg class="abs" style="left:1002.2px;top:314.6px;" width="16" height="17.6" viewBox="0 0 16 17.6"><rect x="0.3" y="0.3" width="12.6" height="15" fill="#eeeeef"/><path d="M2 3 H8 M2 5.4 H5 M2 9 H8 M2 11.6 H6" stroke="#c9cacf" stroke-width="1"/><path d="M2.4 2.8 H5 M3.6 5.4 H7 M2.4 7.2 H4.4" stroke="#e04a55" stroke-width="1.1"/><path d="M13.4 5.6 L15.6 7.6 L7.8 15.6 L5.6 13.6Z" fill="#4e4943"/><path d="M13.4 5.6 L15.6 7.6 L14.4 8.8 L12.2 6.8Z" fill="#f0a0c0"/><path d="M5.6 13.6 L7.8 15.6 L4.4 17Z" fill="#f0c896"/></svg>
<svg class="abs" style="left:1001px;top:340.8px;" width="18" height="18" viewBox="0 0 18 18"><path d="M0.6 12 L5.4 0.8 H6.6 L11.2 12 M2.6 8 H9.2" stroke="#71747e" stroke-width="1.3" fill="none"/><path d="M16.4 4.6 L17.6 5.8 L12 13.2 L10.6 12Z" fill="#e8e8ea"/><path d="M15 6 L17.4 3 L17.8 5.4Z" fill="#f08a18"/><path d="M10.6 12 L12 13.2 L10.4 15.8 L7.6 17 L8.6 14.2Z" fill="#c2542a"/><circle cx="8" cy="16.6" r="1.2" fill="#e03ad6"/></svg>
<!-- p_bottom -->
<div id="status" class="abs"></div>
<div class="abs" style="left:0px;top:520px;width:690px;height:1px;background:#262833;"></div>
<div class="t" style="left:8.60px;top:526px;font-size:9.9px;line-height:12px;height:12px;color:#c3c6d0;transform:scaleX(0.8985);transform-origin:0 0;">Página 1 de 1</div>
<div class="t" style="left:127.40px;top:526px;font-size:9.9px;line-height:12px;height:12px;color:#c3c6d0;transform:scaleX(0.9528);transform-origin:0 0;">0 palabras, 0 caracteres</div>
<div class="t" style="left:291.80px;top:526px;font-size:9.9px;line-height:12px;height:12px;color:#c3c6d0;transform:scaleX(0.9576);transform-origin:0 0;">Estilo de página predeterminado</div>
<div class="t" style="left:515.60px;top:526px;font-size:9.9px;line-height:12px;height:12px;color:#c3c6d0;transform:scaleX(0.9205);transform-origin:0 0;">Español (Venezuela)</div>
<svg class="abs" style="left:688.4px;top:527.4px;" width="12" height="7" viewBox="0 0 12 7"><path d="M0.4 0.4 H3.2 M0.4 6.4 H3.2 M1.8 0.4 V6.4" stroke="#8e909a" stroke-width="0.9" fill="none"/><path d="M6 4.6 V6.2 H10.4 V4.6" stroke="#5c5f6a" stroke-width="0.9" fill="none"/></svg>
<svg class="abs" style="left:711.6px;top:526.6px;" width="9.4" height="6.6" viewBox="0 0 9.4 6.6"><rect x="0" y="0" width="9.2" height="6.4" fill="#e6e6e8"/><path d="M3 1.4 H6.2 V5 H3Z M4.6 0.8 V5.6" stroke="#6a6c74" stroke-width="0.8" fill="none"/></svg>
<svg class="abs" style="left:828.2px;top:527px;" width="6.4" height="7.8" viewBox="0 0 6.4 7.8"><path d="M0.6 0.6 H3.8 L5.6 2.4 V7 H0.6Z" stroke="#c4621c" stroke-width="1.1" fill="none"/></svg>
<svg class="abs" style="left:838.6px;top:527px;" width="14" height="7.8" viewBox="0 0 14 7.8"><path d="M0.6 0.6 H3.8 L5.6 2.4 V7 H0.6Z M8 0.6 H11.2 L13 2.4 V7 H8Z" stroke="#5f626d" stroke-width="1" fill="none"/></svg>
<svg class="abs" style="left:857px;top:527px;" width="12.4" height="7.8" viewBox="0 0 12.4 7.8"><path d="M6 1.8 Q6 0.6 4.6 0.6 H2.2 Q0.6 0.6 0.6 2.2 V7 H6Z M6 1.8 Q6 0.6 7.4 0.6 H9.8 Q11.4 0.6 11.4 2.2 V7 H6Z" stroke="#777a84" stroke-width="1" fill="none"/></svg>
<div class="abs" style="left:884px;top:530.6px;width:6.2px;height:1px;background:#60636d;"></div>
<div class="abs" style="left:895.2px;top:530.4px;width:73.6px;height:1px;background:#b9bbc3;"></div>
<div class="abs" style="left:905.9px;top:528.2px;width:1px;height:5px;background:#b9bbc3;"></div>
<svg class="abs" style="left:927px;top:527px;" width="7.6" height="7.6" viewBox="0 0 7.6 7.6"><circle cx="3.8" cy="3.8" r="3.6" fill="#d7d7d9"/></svg>
<div class="abs" style="left:972.4px;top:530.6px;width:6.8px;height:1px;background:#6a6d77;"></div>
<div class="abs" style="left:975.3px;top:527.6px;width:1px;height:7px;background:#6a6d77;"></div>
<div class="t" style="left:991.90px;top:526px;font-size:9.9px;line-height:12px;height:12px;color:#c3c6d0;transform:scaleX(0.8585);transform-origin:0 0;">100 %</div>
<div id="taskbar" class="abs"></div>
<div class="abs" style="left:78px;top:539px;width:36px;height:34px;background:#222538;"></div>
<div class="abs" style="left:78px;top:573px;width:36px;height:2px;background:#c416c6;"></div>
<svg class="abs" style="left:6.4px;top:547.6px;" width="22.6" height="18.6" viewBox="0 0 22.6 18.6"><ellipse cx="13.9" cy="4.3" rx="7" ry="4.1" fill="#f39a0e"/><ellipse cx="19.4" cy="12.6" rx="3.2" ry="4.4" fill="#6aaef0"/><ellipse cx="12.8" cy="15.2" rx="4" ry="3" fill="#e2cf1a"/><ellipse cx="5.8" cy="10.6" rx="5.6" ry="7.3" fill="#da1f1f"/><ellipse cx="12.2" cy="10.5" rx="7.2" ry="5.3" fill="#040406"/><path d="M7.4 5.9 H13.6" stroke="#4a8ee0" stroke-width="0.7"/><path d="M11.8 14.7 H16" stroke="#4a8ee0" stroke-width="0.6"/></svg>
<div class="t" style="left:13.40px;top:554px;font-size:7.6px;line-height:9px;height:9px;color:#d6d7dc;transform:scaleX(0.6921);transform-origin:0 0;">OS</div>
<svg class="abs" style="left:54px;top:551px;" width="12.4" height="12.6" viewBox="0 0 12.4 12.6"><circle cx="6" cy="6.2" r="5.7" fill="none" stroke="#701717" stroke-width="0.9"/><path d="M7.8 3.2 A2.7 2.7 0 1 0 8.8 6" stroke="#a8421a" stroke-width="1" fill="none"/><circle cx="5" cy="4.6" r="1" fill="#c9a01c"/><circle cx="6.2" cy="5" r="0.8" fill="#c0401c"/></svg>
<svg class="abs" style="left:90px;top:550.6px;" width="12" height="12" viewBox="0 0 12 12"><g fill="none" stroke="#1f8fe0" stroke-width="1.15"><path d="M7.6 0.8 H2 Q0.8 0.8 0.8 2 V10 Q0.8 11.2 2 11.2 H6.2"/><path d="M2.8 3.6 H7 M2.8 5.6 H6.4 M2.8 7.6 H5.4"/><path d="M7.8 1 L10.8 4 M10.7 1.1 L8 3.9"/><rect x="6.8" y="7" width="4.6" height="4" rx="2"/><path d="M8.2 9 H10"/></g></svg>
<svg class="abs" style="left:127px;top:551px;" width="11.4" height="12.2" viewBox="0 0 11.4 12.2"><path d="M10.6 0.8 L0.8 6.2 L4.2 7.8 L5 11.2 L7 9 L9.4 10.4Z" fill="none" stroke="#173a7a" stroke-width="1" stroke-linejoin="round"/></svg>
<svg class="abs" style="left:720.2px;top:548px;" width="17" height="17" viewBox="0 0 17 17"><path d="M15.2 0.8 L14.6 6.4 M15.2 0.9 L1 8.8 L5.4 11" stroke="#1c8ef0" stroke-width="1.4" fill="none" stroke-linejoin="round" stroke-linecap="round"/><rect x="5.2" y="8.8" width="11.2" height="7.6" rx="1.2" fill="#85878f"/><rect x="6.4" y="10.6" width="8.8" height="3.6" fill="#a9abb2"/><path d="M7.4 13.4 L8.6 11.2 M10 13.4 L11.2 11.2 M12.6 13.4 L13.8 11.2" stroke="#5d5f67" stroke-width="0.8"/></svg>
<svg class="abs" style="left:758px;top:550.6px;" width="13.4" height="12.4" viewBox="0 0 13.4 12.4"><path d="M0.4 4 H2.6 L6.6 0.6 V11.8 L2.6 8.4 H0.4Z" fill="#f1f1f3"/><path d="M8.2 3 Q10 6.2 8.2 9.4" stroke="#8a8c94" stroke-width="1.3" fill="none"/><path d="M9.8 1 Q13.6 6.2 9.8 11.4" stroke="#e8e8ea" stroke-width="1.3" fill="none"/></svg>
<svg class="abs" style="left:791.8px;top:548.4px;" width="18" height="16.4" viewBox="0 0 18 16.4"><rect x="6" y="0.4" width="10.8" height="7.8" rx="0.6" fill="#d8dae0"/><rect x="7" y="1.4" width="8.8" height="5.4" fill="#4a8ede"/><rect x="9.6" y="8.2" width="4" height="1.6" fill="#b8bac0"/><rect x="12" y="9.6" width="5.4" height="1.2" fill="#d0d2d8"/><rect x="0.4" y="4.4" width="11.2" height="8" rx="0.6" fill="#e0e2e8"/><rect x="1.4" y="5.4" width="9.2" height="5.6" fill="#5a9ae6"/><path d="M1.4 11 L6 7.6 L10.6 9.6 V11Z" fill="#7fb4f0"/><rect x="4.4" y="12.4" width="3.4" height="1.8" fill="#b8bac0"/><rect x="1.6" y="14" width="9" height="1.8" rx="0.8" fill="#e4e6ea"/></svg>
<svg class="abs" style="left:832px;top:552.4px;" width="9.4" height="8.6" viewBox="0 0 9.4 8.6"><path d="M4.7 0.2 L9.2 5 H0.2Z M0.2 6.4 H9.2 V8.4 H0.2Z" fill="#f4f4f6"/></svg>
<svg class="abs" style="left:864.6px;top:548px;" width="16.4" height="17.4" viewBox="0 0 16.4 17.4"><rect x="1.4" y="0.2" width="2.8" height="1.4" fill="#b8bac0"/><rect x="0.2" y="1.2" width="5.4" height="15.6" rx="0.9" fill="#5aa832"/><rect x="1" y="2" width="1.6" height="14" fill="#9ede68"/><rect x="3.6" y="2" width="1.4" height="14" fill="#3f7f22"/><path d="M8 9.6 Q8.4 5.8 12 6 Q14.6 6.2 15.2 8" stroke="#8a8c94" stroke-width="0.9" fill="none"/><rect x="7" y="10" width="8.6" height="5.4" rx="0.8" fill="#74767e"/><rect x="8.2" y="12.8" width="2.2" height="4.4" fill="#e2e3e7"/><rect x="12.2" y="12.8" width="2.2" height="4.4" fill="#e2e3e7"/><rect x="7" y="10" width="8.6" height="1.6" rx="0.8" fill="#9a9ca4"/></svg>
<div class="t" style="left:900.00px;top:552px;font-size:10px;line-height:12px;height:12px;color:#e4e6ec;transform:scaleX(0.8470);transform-origin:0 0;">ES</div>
<div class="t" style="left:924.90px;top:552px;font-size:10.2px;line-height:12px;height:12px;color:#f4f5f8;font-weight:bold;transform:scaleX(1.0081);transform-origin:0 0;">15:26</div>
<svg class="abs" style="left:963.2px;top:548.8px;" width="14" height="16.6" viewBox="0 0 14 16.6"><path d="M7 0.4 Q8.2 0.4 8.2 1.8 Q11.6 3 11.6 7.4 Q11.6 10.8 13.6 12.4 V13.2 H0.4 V12.4 Q2.4 10.8 2.4 7.4 Q2.4 3 5.8 1.8 Q5.8 0.4 7 0.4Z" fill="#f6f6f8"/><path d="M5.2 14.4 H8.8 Q8.6 16.2 7 16.2 Q5.4 16.2 5.2 14.4Z" fill="#f6f6f8"/></svg>
<svg class="abs" style="left:999.2px;top:550.2px;" width="14" height="14" viewBox="0 0 14 14"><rect x="0.6" y="0.6" width="12.8" height="12.8" rx="0.8" fill="none" stroke="#d25560" stroke-width="1.1"/><rect x="2.4" y="10" width="9.2" height="1.6" fill="#d25560"/></svg>
</body>
</html>
